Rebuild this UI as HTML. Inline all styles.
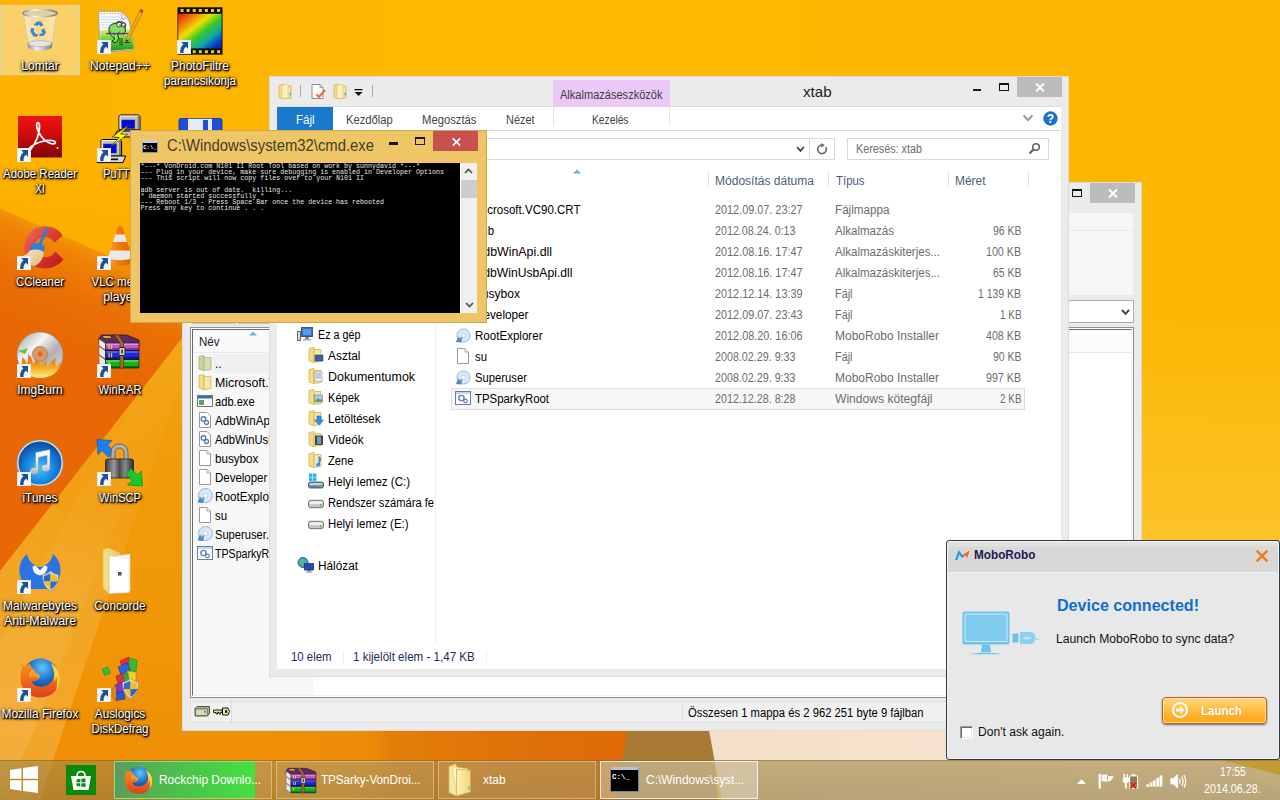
<!DOCTYPE html>
<html lang="hu"><head><meta charset="utf-8"><title>Asztal</title>
<style>
*{box-sizing:border-box;margin:0;padding:0}
html,body{width:1280px;height:800px;overflow:hidden;background:#fbb800}
body{font-family:"Liberation Sans","DejaVu Sans",sans-serif;font-size:12px;color:#000;position:relative}
.a{position:absolute}
.t{position:absolute;white-space:pre;overflow:visible}
.dl{position:absolute;white-space:pre;color:#fff;text-shadow:1px 1px 1px #000,1px 1px 2px rgba(0,0,0,.9),0 1px 3px rgba(0,0,0,.9),0 0 3px rgba(0,0,0,.7)}
svg{position:absolute;overflow:visible}
#bg,#icons,#tc,#explorer,#cmd,#popup,#taskbar{position:absolute;left:0;top:0;width:1280px;height:800px;overflow:hidden}

</style></head>
<body>
<div id="bg">
<svg style="left:0;top:0" width="1280" height="800" viewBox="0 0 1280 800">
<defs>
<linearGradient id="g0" x1="0" y1="0" x2="1" y2="0"><stop offset="0" stop-color="#fdb300"/><stop offset="0.45" stop-color="#fdba00"/><stop offset="1" stop-color="#fbb600"/></linearGradient>
<linearGradient id="g0b" x1="0" y1="0" x2="0" y2="1"><stop offset="0" stop-color="#fcc42c" stop-opacity="0"/><stop offset="1" stop-color="#fcc42c" stop-opacity="1"/></linearGradient>
<linearGradient id="g1" gradientUnits="userSpaceOnUse" x1="60" y1="235" x2="20" y2="327"><stop offset="0" stop-color="#f49208"/><stop offset=".12" stop-color="#f08406"/><stop offset=".5" stop-color="#ea7005"/><stop offset="1" stop-color="#e76804"/></linearGradient>
<linearGradient id="g3" x1="0" y1="0" x2="0" y2="1"><stop offset="0" stop-color="#f5a812"/><stop offset=".3" stop-color="#f19c0a"/><stop offset=".7" stop-color="#f09606"/><stop offset="1" stop-color="#ee8c06"/></linearGradient>
<linearGradient id="g2" gradientUnits="userSpaceOnUse" x1="182" y1="0" x2="625" y2="0"><stop offset="0" stop-color="#ef9006"/><stop offset="0.35" stop-color="#ee8e08"/><stop offset="0.43" stop-color="#ec8a08"/><stop offset="0.47" stop-color="#e47e08"/><stop offset="0.8" stop-color="#de7008"/><stop offset="1" stop-color="#e06a08"/></linearGradient>
<linearGradient id="g4" x1="0" y1="0" x2="1" y2="0"><stop offset="0" stop-color="#f5dfc8"/><stop offset="1" stop-color="#f8e8d8"/></linearGradient>
<linearGradient id="gb1" gradientUnits="userSpaceOnUse" x1="170" y1="350" x2="20" y2="720"><stop offset="0" stop-color="#f8c868" stop-opacity="0.05"/><stop offset=".4" stop-color="#f8c868" stop-opacity=".1"/><stop offset=".65" stop-color="#f8c868" stop-opacity=".28"/><stop offset="1" stop-color="#f8c868" stop-opacity=".38"/></linearGradient>
<linearGradient id="gb2" gradientUnits="userSpaceOnUse" x1="170" y1="350" x2="20" y2="720"><stop offset="0" stop-color="#fad890" stop-opacity="0"/><stop offset=".5" stop-color="#fad890" stop-opacity=".05"/><stop offset="1" stop-color="#fad890" stop-opacity=".16"/></linearGradient>
<linearGradient id="g5" x1="0" y1="0" x2="0" y2="1"><stop offset="0" stop-color="#fca800" stop-opacity="0"/><stop offset="1" stop-color="#fba600" stop-opacity=".9"/></linearGradient>
</defs>
<rect width="1280" height="800" fill="url(#g0)"/>
<polygon points="0,150 260,150 260,320 0,208" fill="url(#g5)"/>
<rect x="1060" y="300" width="220" height="260" fill="url(#g0b)"/>
<rect x="1060" y="560" width="220" height="200" fill="#fcc42c"/>
<polygon points="0,338 182,338 260,300 260,800 0,800" fill="url(#g3)"/>
<polygon points="0,208.500 130,265 182,288 182,338 0,571" fill="url(#g1)"/>
<polygon points="0,571 182,338 182,379 53,760 40,800 0,800" fill="url(#gb1)"/>
<polygon points="0,640 110,440 182,358 30,740 0,800" fill="url(#gb2)"/>
<rect x="182" y="725" width="448" height="75" fill="url(#g2)"/>
<polygon points="628,725 712,725 718,800 616,800" fill="#a87a34"/>
<polygon points="708,725 1280,725 1280,800 722,800" fill="url(#g4)"/>
<polygon points="1200,755 1280,755 1280,775" fill="#f8bc20"/>
<polygon points="1200,755 1280,775 1280,792" fill="#fcecd0"/>
</svg>
</div>
<div id="icons">
<div class="a" style="left:0px;top:5px;width:80px;height:70px;background:rgba(246,244,240,.44);border:1px solid rgba(205,215,205,.8);"></div>
<svg style="left:16px;top:7px" width="48" height="48" viewBox="0 0 48 48"><defs><linearGradient id="rb1" x1="0" y1="0" x2="1" y2="0"><stop offset="0" stop-color="#fff" stop-opacity=".55"/><stop offset=".5" stop-color="#fff" stop-opacity=".2"/><stop offset="1" stop-color="#fff" stop-opacity=".5"/></linearGradient>
<linearGradient id="rb2" x1="0" y1="0" x2="1" y2="0"><stop offset="0" stop-color="#8d8d8d"/><stop offset=".35" stop-color="#f4f4f4"/><stop offset=".7" stop-color="#b5b5b5"/><stop offset="1" stop-color="#7a7a7a"/></linearGradient></defs>
<path d="M7.5 6.5 L12.5 40 Q24 47 35.5 40 L40.5 6.5 Z" fill="url(#rb1)" stroke="#c9c3a8" stroke-width=".7"/>
<path d="M11.6 36 Q24 30.5 36.4 36 L35.8 41 Q24 47.5 12.2 41 Z" fill="url(#rb2)"/>
<ellipse cx="24" cy="36.6" rx="11.6" ry="3" fill="#e6e6e6" stroke="#a8a8a8" stroke-width=".6"/>
<ellipse cx="24" cy="6.3" rx="17" ry="3.4" fill="#d9d2ae" fill-opacity=".8" stroke="url(#rb2)" stroke-width="1.6"/>
<path d="M17.5 18 L21 14.5 H25 L27.5 18.5 L24.5 19.5 L23 17.5 L21.5 19 Z M28 21 L30 25.5 L27.5 29 H23 L24 26.5 H26.5 L25.2 23.5 Z M15.2 21 L18.5 21.5 L17.8 24 L19.5 27 L22 27 L21 29.8 L17.5 29.5 L14.3 24.5 Z" fill="#3a86e0"/></svg>
<div class="dl" style="left:-160px;width:400px;text-align:center;top:59.2px;height:15px;line-height:15px;font-size:12px;color:#fff;transform:scaleX(1.0041);transform-origin:50% 50%;">Lomtár</div>
<svg style="left:95.5px;top:7px" width="48" height="48" viewBox="0 0 48 48"><defs><linearGradient id="np1" x1="0" y1="0" x2="0" y2="1"><stop offset="0" stop-color="#f0f488"/><stop offset=".35" stop-color="#8cd848"/><stop offset=".75" stop-color="#40b030"/><stop offset="1" stop-color="#168a1c"/></linearGradient></defs>
<path d="M2.600 4.300 H24.800 L32.600 11.400 L38.300 42.500 L3.800 45.500 Z" fill="#fbfcfe" stroke="#8e9cb0" stroke-width=".9"/>
<path d="M24.800 4.300 L25.600 11.800 L32.600 11.400 Z" fill="#dfe6ee" stroke="#8e9cb0" stroke-width=".6"/>
<path d="M4.500 10h20M4.500 12.700h24M4.600 15.400h25M4.700 18.100h26M4.800 20.800h26" stroke="#bcd2ec" stroke-width=".9"/>
<path d="M4.300 23 L34.700 21.500 L37.600 41.800 L4.400 44.700 Z" fill="url(#np1)"/>
<circle cx="5.2" cy="6.5" r=".75" fill="#f0a020"/><circle cx="8.1" cy="6.5" r=".75" fill="#f0a020"/><circle cx="11.0" cy="6.5" r=".75" fill="#f0a020"/><circle cx="13.9" cy="6.5" r=".75" fill="#f0a020"/><circle cx="16.8" cy="6.5" r=".75" fill="#f0a020"/><circle cx="19.7" cy="6.5" r=".75" fill="#f0a020"/><circle cx="22.6" cy="6.5" r=".75" fill="#f0a020"/>
<path d="M13 24 Q12.500 17 19 16.500 Q22 13.500 26.500 15 Q30.500 17 29 21.500 Q31 24 27.500 26.500 L21.500 27 Q24 31 21 35 Q17.500 37 16 34 Q19 33.500 18.500 30.500 Q14 29.500 13 24 Z" fill="#86e060" stroke="#14360c" stroke-width="1"/>
<circle cx="23.300" cy="17.600" r="2.400" fill="#fff" stroke="#111" stroke-width=".8"/><circle cx="27.800" cy="18" r="2.100" fill="#fff" stroke="#111" stroke-width=".8"/>
<circle cx="24" cy="18" r=".7" fill="#111"/><circle cx="28.300" cy="18.300" r=".6" fill="#111"/>
<path d="M10 26.500 H32" stroke="#7a2a8a" stroke-width="1.300"/><path d="M13 26.500 L15 24.500 M17 26.500 L19 28.500 M22 26.500 L24 24.500 M26 26.500 L28 28.500" stroke="#14360c" stroke-width=".8"/>
<path d="M24 31 V38.500 M26 31 V38.500 M28.500 35.500 H34" stroke="#14360c" stroke-width=".9"/>
<path d="M44.800 2 L47.300 3.600 L32.300 33.600 L30 35 L30 32.200 Z" fill="#f4b020" stroke="#9a6408" stroke-width=".6"/>
<path d="M44.800 2 L47.300 3.600 L46 6.200 L43.600 4.600 Z" fill="#c83c3c"/><path d="M30 32.200 L30 35 L32.300 33.600 Z" fill="#222"/></svg>
<svg style="left:96.5px;top:40px" width="14" height="14" viewBox="0 0 14 14"><rect x="0" y="0" width="14" height="14" fill="#f7f7f4"/><rect x="0.5" y="0.5" width="13" height="13" fill="none" stroke="#e6e8ec" stroke-width="1"/><path d="M4.200 2 H11 V8.800 L9 6.800 C7 8.500 6.200 10.500 6.600 13 H3.300 C2.800 9.500 4 6.500 6.400 4.300 Z" fill="#1a509e"/></svg>
<div class="dl" style="left:-80.5px;width:400px;text-align:center;top:59.2px;height:15px;line-height:15px;font-size:12px;color:#fff;transform:scaleX(1.0104);transform-origin:50% 50%;">Notepad++</div>
<svg style="left:175.5px;top:7px" width="48" height="48" viewBox="0 0 48 48"><defs><linearGradient id="pf1" x1="0" y1="0" x2="1" y2="1"><stop offset="0" stop-color="#e81808"/><stop offset=".2" stop-color="#f07808"/><stop offset=".38" stop-color="#f0e000"/><stop offset=".55" stop-color="#38c828"/><stop offset=".72" stop-color="#10a8a8"/><stop offset=".88" stop-color="#0838c8"/><stop offset="1" stop-color="#0820a0"/></linearGradient></defs>
<rect x="1.5" y="0.3" width="45" height="47.4" fill="#0a0a0a"/>
<rect x="2.2" y="6.8" width="43.4" height="34.6" fill="url(#pf1)"/><rect x="4.5" y="2" width="3" height="3" fill="#f4c818"/><rect x="4.5" y="43.2" width="3" height="3" fill="#f4c818"/><rect x="10.6" y="2" width="3" height="3" fill="#f4c818"/><rect x="10.6" y="43.2" width="3" height="3" fill="#f4c818"/><rect x="16.7" y="2" width="3" height="3" fill="#f4c818"/><rect x="16.7" y="43.2" width="3" height="3" fill="#f4c818"/><rect x="22.8" y="2" width="3" height="3" fill="#f4c818"/><rect x="22.8" y="43.2" width="3" height="3" fill="#f4c818"/><rect x="28.9" y="2" width="3" height="3" fill="#f4c818"/><rect x="28.9" y="43.2" width="3" height="3" fill="#f4c818"/><rect x="35.0" y="2" width="3" height="3" fill="#f4c818"/><rect x="35.0" y="43.2" width="3" height="3" fill="#f4c818"/><rect x="41.1" y="2" width="3" height="3" fill="#f4c818"/><rect x="41.1" y="43.2" width="3" height="3" fill="#f4c818"/></svg>
<svg style="left:176.5px;top:40px" width="14" height="14" viewBox="0 0 14 14"><rect x="0" y="0" width="14" height="14" fill="#f7f7f4"/><rect x="0.5" y="0.5" width="13" height="13" fill="none" stroke="#e6e8ec" stroke-width="1"/><path d="M4.200 2 H11 V8.800 L9 6.800 C7 8.500 6.200 10.500 6.600 13 H3.300 C2.800 9.500 4 6.500 6.400 4.300 Z" fill="#1a509e"/></svg>
<div class="dl" style="left:-0.5px;width:400px;text-align:center;top:59.2px;height:15px;line-height:15px;font-size:12px;color:#fff;transform:scaleX(0.9961);transform-origin:50% 50%;">PhotoFiltre</div>
<div class="dl" style="left:-0.5px;width:400px;text-align:center;top:74.2px;height:15px;line-height:15px;font-size:12px;color:#fff;transform:scaleX(0.9724);transform-origin:50% 50%;">parancsikonja</div>
<svg style="left:16px;top:115px" width="48" height="48" viewBox="0 0 48 48"><defs><linearGradient id="ad1" x1="0" y1="0" x2="0" y2="1"><stop offset="0" stop-color="#f01414"/><stop offset=".5" stop-color="#c80a0a"/><stop offset="1" stop-color="#7c0606"/></linearGradient></defs>
<rect x="2" y="1" width="44" height="41.5" fill="url(#ad1)"/>
<path d="M14 35.5 C20 28 24 18 23.5 10.5 C23.2 6.5 20.5 6.5 20.6 10.5 C21 17 27 25.5 34 28.3 C39.5 30 41.2 27.2 37.5 25.8 C31 24 19 27.5 13 33.5 C10.5 36 12 37.5 14 35.5 Z" fill="none" stroke="#fff" stroke-width="1.7"/>
<circle cx="41.5" cy="33" r=".9" fill="#fff"/></svg>
<svg style="left:17px;top:148px" width="14" height="14" viewBox="0 0 14 14"><rect x="0" y="0" width="14" height="14" fill="#f7f7f4"/><rect x="0.5" y="0.5" width="13" height="13" fill="none" stroke="#e6e8ec" stroke-width="1"/><path d="M4.200 2 H11 V8.800 L9 6.800 C7 8.500 6.200 10.500 6.600 13 H3.300 C2.800 9.500 4 6.500 6.400 4.300 Z" fill="#1a509e"/></svg>
<div class="dl" style="left:-160px;width:400px;text-align:center;top:167.2px;height:15px;line-height:15px;font-size:12px;color:#fff;transform:scaleX(0.9562);transform-origin:50% 50%;">Adobe Reader</div>
<div class="dl" style="left:-160px;width:400px;text-align:center;top:182.2px;height:15px;line-height:15px;font-size:12px;color:#fff;transform:scaleX(0.8291);transform-origin:50% 50%;">XI</div>
<svg style="left:95.5px;top:115px" width="48" height="48" viewBox="0 0 48 48"><path d="M23 1 L24.500 0 H42.500 L44 1.500 V14.800 H23 Z" fill="#c4c4c4" stroke="#000" stroke-width="1"/>
<path d="M41.500 1.500 H43.500 V14.300 H41.500 Z" fill="#808080"/><path d="M24 1 H42 M24 1 V14" stroke="#fff" stroke-width=".8"/>
<rect x="25.800" y="5" width="13" height="8.500" fill="#0404f4" stroke="#404040" stroke-width=".6"/>
<path d="M21 16 H47 L44 22 H18 Z" fill="#c4c4c4" stroke="#000" stroke-width="1"/>
<path d="M5 25.500 L6.500 24.500 H24 L25.600 26 V41 H5 Z" fill="#c4c4c4" stroke="#000" stroke-width="1"/>
<path d="M23 26 H25 V40.500 H23 Z" fill="#808080"/><path d="M6 25.500 H23.500 M6 25.500 V40" stroke="#fff" stroke-width=".8"/>
<rect x="7.300" y="29" width="13" height="9" fill="#0404f4" stroke="#404040" stroke-width=".6"/>
<path d="M3.500 41 H29.700 L27 47.600 H1 Z" fill="#d8d8d8" stroke="#000" stroke-width="1"/><path d="M10 43.500 H22 V45.200 H10 Z" fill="#111"/>
<path d="M34.600 8.400 L16.200 21.900 L23.400 22.500 L13.200 32.800 L31.600 19.300 L24.500 19 Z" fill="#ffff00" stroke="#1a1a00" stroke-width=".6"/></svg>
<svg style="left:96.5px;top:148px" width="14" height="14" viewBox="0 0 14 14"><rect x="0" y="0" width="14" height="14" fill="#f7f7f4"/><rect x="0.5" y="0.5" width="13" height="13" fill="none" stroke="#e6e8ec" stroke-width="1"/><path d="M4.200 2 H11 V8.800 L9 6.800 C7 8.500 6.200 10.500 6.600 13 H3.300 C2.800 9.500 4 6.500 6.400 4.300 Z" fill="#1a509e"/></svg>
<div class="dl" style="left:-80.5px;width:400px;text-align:center;top:167.2px;height:15px;line-height:15px;font-size:12px;color:#fff;transform:scaleX(0.8971);transform-origin:50% 50%;">PuTTY</div>
<svg style="left:175.5px;top:115px" width="48" height="48" viewBox="0 0 48 48"><path d="M3 5 Q3 3.5 4.5 3.5 H44 Q46 3.5 46 5.5 V45 H3 Z" fill="#1c50d8" stroke="#0c2c90" stroke-width=".8"/>
<rect x="12" y="3.8" width="24" height="16" fill="#e6eaf2"/><rect x="27" y="5" width="5" height="13" fill="#1c50d8"/></svg>
<svg style="left:16px;top:223px" width="48" height="48" viewBox="0 0 48 48"><defs><linearGradient id="cc1" x1="0" y1="0" x2="1" y2="1"><stop offset="0" stop-color="#f07060"/><stop offset=".5" stop-color="#d83a30"/><stop offset="1" stop-color="#b81818"/></linearGradient>
<linearGradient id="cc2" x1="0" y1="0" x2="1" y2="1"><stop offset="0" stop-color="#f8e8c8"/><stop offset="1" stop-color="#e0b880"/></linearGradient></defs>
<path d="M46.5 12.5 C40 1.5 24 0.5 15 8.5 C5.5 17 6 33.5 16 41.5 C25 48 39.5 46.5 47.5 36.5 L39.5 28.5 C35.5 34.5 27 36.5 22 31.5 C17 26.5 18 18.5 24 15 C29 12.5 35.5 14.5 38.5 19.5 Z" fill="url(#cc1)"/>
<path d="M30 4 L32.5 5 L24.5 24 L21.5 23 Z" fill="#2a7fd8"/>
<path d="M15.5 21 Q21 18 28.5 23 L28 29 Q21 25 14 27.5 Z" fill="#2a80dc"/>
<path d="M14 27.5 Q21 25 28 29 Q27 38 20 42.5 Q11 44 1.5 35.5 Q10 33 14 27.5 Z" fill="url(#cc2)"/></svg>
<svg style="left:17px;top:256px" width="14" height="14" viewBox="0 0 14 14"><rect x="0" y="0" width="14" height="14" fill="#f7f7f4"/><rect x="0.5" y="0.5" width="13" height="13" fill="none" stroke="#e6e8ec" stroke-width="1"/><path d="M4.200 2 H11 V8.800 L9 6.800 C7 8.500 6.200 10.500 6.600 13 H3.300 C2.800 9.500 4 6.500 6.400 4.300 Z" fill="#1a509e"/></svg>
<div class="dl" style="left:-160px;width:400px;text-align:center;top:275.2px;height:15px;line-height:15px;font-size:12px;color:#fff;transform:scaleX(0.9469);transform-origin:50% 50%;">CCleaner</div>
<svg style="left:95.5px;top:223px" width="48" height="48" viewBox="0 0 48 48"><defs><linearGradient id="vl1" x1="0" y1="0" x2="1" y2="0"><stop offset="0" stop-color="#f8a848"/><stop offset=".45" stop-color="#f47c08"/><stop offset="1" stop-color="#d86000"/></linearGradient></defs>
<path d="M5 36 H43 L46 46 H2 Z" fill="#f08a10"/>
<path d="M21.5 4 Q24 1.5 26.5 4 L38 40 Q24 46 10 40 Z" fill="url(#vl1)"/>
<path d="M19.3 11.5 H28.7 L31 19 H17 Z" fill="#e8e8e8"/>
<path d="M14.2 27.5 H33.8 L36.2 35.5 Q24 39 11.8 35.5 Z" fill="#e8e8e8"/></svg>
<svg style="left:96.5px;top:256px" width="14" height="14" viewBox="0 0 14 14"><rect x="0" y="0" width="14" height="14" fill="#f7f7f4"/><rect x="0.5" y="0.5" width="13" height="13" fill="none" stroke="#e6e8ec" stroke-width="1"/><path d="M4.200 2 H11 V8.800 L9 6.800 C7 8.500 6.200 10.500 6.600 13 H3.300 C2.800 9.500 4 6.500 6.400 4.300 Z" fill="#1a509e"/></svg>
<div class="dl" style="left:-80.5px;width:400px;text-align:center;top:275.2px;height:15px;line-height:15px;font-size:12px;color:#fff;transform:scaleX(0.9602);transform-origin:50% 50%;">VLC media</div>
<div class="dl" style="left:-80.5px;width:400px;text-align:center;top:290.2px;height:15px;line-height:15px;font-size:12px;color:#fff;transform:scaleX(1.0250);transform-origin:50% 50%;">player</div>
<svg style="left:16px;top:331px" width="48" height="48" viewBox="0 0 48 48"><defs><linearGradient id="ib1" x1="0" y1="0" x2="1" y2="1"><stop offset="0" stop-color="#9a9a9a"/><stop offset=".35" stop-color="#f4f4f4"/><stop offset=".6" stop-color="#b0b0b0"/><stop offset="1" stop-color="#e0e0e0"/></linearGradient>
<linearGradient id="ib2" x1="0" y1="0" x2="0" y2="1"><stop offset="0" stop-color="#e84a08"/><stop offset=".5" stop-color="#f8a010"/><stop offset="1" stop-color="#fff090"/></linearGradient></defs>
<circle cx="24" cy="24" r="23" fill="url(#ib1)" stroke="#8a8a8a" stroke-width=".6"/>
<path d="M2 20 L12 17 L9 23 Z" fill="#58c848"/><path d="M46 16 L36 19 L38 22 Z" fill="#d898d8"/>
<circle cx="24" cy="23" r="7.5" fill="#d89868" stroke="#b07848" stroke-width=".8"/><circle cx="24" cy="23" r="2.5" fill="#e86a10"/>
<path d="M4 36 Q7 30 6 26 Q10 29 11 33 Q13 27 12 23 Q17 28 17 34 Q20 30 19 27 Q24 31 24 36 Q27 31 31 30 Q30 34 32 36 Q35 30 40 27 Q38 33 41 36 Q43 32 45 31 Q44 38 38 43 Q24 51 10 43 Q6 40 4 36 Z" fill="url(#ib2)"/></svg>
<svg style="left:17px;top:364px" width="14" height="14" viewBox="0 0 14 14"><rect x="0" y="0" width="14" height="14" fill="#f7f7f4"/><rect x="0.5" y="0.5" width="13" height="13" fill="none" stroke="#e6e8ec" stroke-width="1"/><path d="M4.200 2 H11 V8.800 L9 6.800 C7 8.500 6.200 10.500 6.600 13 H3.300 C2.800 9.500 4 6.500 6.400 4.300 Z" fill="#1a509e"/></svg>
<div class="dl" style="left:-160px;width:400px;text-align:center;top:383.2px;height:15px;line-height:15px;font-size:12px;color:#fff;transform:scaleX(1.0033);transform-origin:50% 50%;">ImgBurn</div>
<svg style="left:95.5px;top:331px" width="48" height="48" viewBox="0 0 48 48"><g transform="translate(2.5,3.5)"><path d="M0.500 4 L3 0.500 H28 L40.500 5.500 L40.500 12.500 H7 L0.500 8 Z" fill="#5c2c60" stroke="#2a1030" stroke-width=".8"/>
<path d="M4 1.500 H11 L13 3.500 H6 Z" fill="#c8b830"/>
<path d="M0.500 4.500 L7 9 V15.500 L0.500 11 Z" fill="#eeeef4" stroke="#555" stroke-width=".5"/>
<path d="M7 8.500 H40.500 V15.500 H7 Z" fill="#c458c8"/><path d="M7 8.500 H40.500 V10.500 H7 Z" fill="#e090e0"/><path d="M7 13.500 H40.500 V15.500 H7 Z" fill="#8a3090"/>
<path d="M0.500 12 L7 16.500 V24.500 L0.500 20 Z" fill="#e8e8f0" stroke="#555" stroke-width=".5"/>
<path d="M7 16.500 H40.500 V24.500 H7 Z" fill="#1c28e0"/><path d="M7 16.500 H40.500 V18.500 H7 Z" fill="#4a60f4"/><path d="M7 22.500 H40.500 V24.500 H7 Z" fill="#101890"/>
<path d="M0.500 21 L7 25.500 V33.500 L0.500 29 Z" fill="#e8e8f0" stroke="#555" stroke-width=".5"/>
<path d="M7 25.500 H40.500 V33.500 H7 Z" fill="#14b020"/><path d="M7 25.500 H40.500 V27.500 H7 Z" fill="#40d848"/><path d="M7 31.500 H40.500 V33.500 H7 Z" fill="#087010"/>
<path d="M7 8.500 H40.500 V33.500 H7 Z" fill="none" stroke="#1a1a1a" stroke-width=".7"/>
<path d="M7 16 H40.500 M7 25 H40.500" stroke="#111" stroke-width="1"/>
<path d="M16 0.500 H20 L25 8.500 V33.500 H21.500 V8.500 Z" fill="#a06a2c" stroke="#4a2c0c" stroke-width=".6"/>
<rect x="20.500" y="13" width="6" height="8" rx="1" fill="#d0d0d0" stroke="#222" stroke-width="1"/><rect x="22.800" y="15" width="1.600" height="4" fill="#333"/>
<path d="M10 10.500h1.200v4H10z M12.500 10.500h1.200v4h-1.200z M10 18.500h1.200v4.500H10z M12.500 18.500h1.200v4.500h-1.200z M10 27h1.200v3.500H10z" fill="#e0cc40"/></g></svg>
<svg style="left:96.5px;top:364px" width="14" height="14" viewBox="0 0 14 14"><rect x="0" y="0" width="14" height="14" fill="#f7f7f4"/><rect x="0.5" y="0.5" width="13" height="13" fill="none" stroke="#e6e8ec" stroke-width="1"/><path d="M4.200 2 H11 V8.800 L9 6.800 C7 8.500 6.200 10.500 6.600 13 H3.300 C2.800 9.500 4 6.500 6.400 4.300 Z" fill="#1a509e"/></svg>
<div class="dl" style="left:-80.5px;width:400px;text-align:center;top:383.2px;height:15px;line-height:15px;font-size:12px;color:#fff;transform:scaleX(0.9347);transform-origin:50% 50%;">WinRAR</div>
<svg style="left:16px;top:439px" width="48" height="48" viewBox="0 0 48 48"><defs><radialGradient id="it1" cx=".5" cy=".62" r=".62"><stop offset="0" stop-color="#40c8fc"/><stop offset=".45" stop-color="#1c8ce8"/><stop offset=".85" stop-color="#0c56b0"/><stop offset="1" stop-color="#0a4898"/></radialGradient>
<linearGradient id="it2" x1="0" y1="0" x2="0" y2="1"><stop offset="0" stop-color="#ffffff"/><stop offset=".6" stop-color="#e0e4ea"/><stop offset="1" stop-color="#a8b0bc"/></linearGradient></defs>
<circle cx="24" cy="24" r="22.300" fill="url(#it1)" stroke="#dde4ec" stroke-width="1.600"/>
<circle cx="24" cy="24" r="23.200" fill="none" stroke="#8a96a4" stroke-width=".5"/>
<path d="M19.500 13.500 L34 10.500 V29 A4.300 3.600 0 1 1 31 25.600 V16.500 L22.500 18.400 V32 A4.300 3.600 0 1 1 19.500 28.600 Z" fill="url(#it2)" stroke="#7a8ca4" stroke-width=".5"/></svg>
<svg style="left:17px;top:472px" width="14" height="14" viewBox="0 0 14 14"><rect x="0" y="0" width="14" height="14" fill="#f7f7f4"/><rect x="0.5" y="0.5" width="13" height="13" fill="none" stroke="#e6e8ec" stroke-width="1"/><path d="M4.200 2 H11 V8.800 L9 6.800 C7 8.500 6.200 10.500 6.600 13 H3.300 C2.800 9.500 4 6.500 6.400 4.300 Z" fill="#1a509e"/></svg>
<div class="dl" style="left:-160px;width:400px;text-align:center;top:491.2px;height:15px;line-height:15px;font-size:12px;color:#fff;transform:scaleX(0.9839);transform-origin:50% 50%;">iTunes</div>
<svg style="left:95.5px;top:439px" width="48" height="48" viewBox="0 0 48 48"><defs><linearGradient id="ws1" x1="0" y1="0" x2="1" y2="0"><stop offset="0" stop-color="#3a3a3a"/><stop offset=".3" stop-color="#9a9a9a"/><stop offset=".5" stop-color="#4a4a4a"/><stop offset=".7" stop-color="#8a8a8a"/><stop offset="1" stop-color="#2a2a2a"/></linearGradient></defs>
<path d="M1 0.5 L16 1.5 L11.5 6 L18 12.5 L12.5 18 L6 11.5 L2 15.5 Z" fill="#1c7ef0" stroke="#0c4ab0" stroke-width=".6"/>
<path d="M15 21 V14 Q15 5 23.5 5 Q32 5 32 14 V21 H28 V14 Q28 9 23.5 9 Q19 9 19 14 V21 Z" fill="#b0b0b0" stroke="#555" stroke-width=".8"/>
<rect x="9.500" y="20" width="28" height="19" rx="2" fill="url(#ws1)" stroke="#222" stroke-width=".8"/>
<path d="M46.500 47 L31.500 46 L36 41.500 L29.500 35 L35 29.500 L41.500 36 L45.500 32 Z" fill="#18c828" stroke="#0c8018" stroke-width=".6"/></svg>
<svg style="left:96.5px;top:472px" width="14" height="14" viewBox="0 0 14 14"><rect x="0" y="0" width="14" height="14" fill="#f7f7f4"/><rect x="0.5" y="0.5" width="13" height="13" fill="none" stroke="#e6e8ec" stroke-width="1"/><path d="M4.200 2 H11 V8.800 L9 6.800 C7 8.500 6.200 10.500 6.600 13 H3.300 C2.800 9.500 4 6.500 6.400 4.300 Z" fill="#1a509e"/></svg>
<div class="dl" style="left:-80.5px;width:400px;text-align:center;top:491.2px;height:15px;line-height:15px;font-size:12px;color:#fff;transform:scaleX(0.9263);transform-origin:50% 50%;">WinSCP</div>
<svg style="left:16px;top:547px" width="48" height="48" viewBox="0 0 48 48"><path d="M11 7 C5 12 2 20 4 28 C5.500 34 9 39 13.500 42 L35 42 C39 39 42.500 34 44 28 C46 20 43 12 37 7 C36 13 31 19 24 20 C17 19 12 13 11 7 Z" fill="#2a72e6"/>
<path d="M16.500 20 Q17 27.500 24 28.500 Q31 27.500 31.500 20 Q30 18 28 19 L24 23.500 L20 19 Q18 18 16.500 20 Z" fill="#fdfdf8"/><path d="M26.5 28 q6 -1.500 8 -4 q2 2.500 8 4 q0.500 11 -8 16 q-8.500 -5 -8 -16 Z" fill="#e8e8e8" stroke="#8a8a8a" stroke-width=".8"/>
<path d="M28.0 29 q4.500 -1.300 6.500 -3 v8.500 h-7 Z" fill="#2a6ad0"/><path d="M34.5 26 q2 1.700 6.500 3 l0.500 5.500 h-7 Z" fill="#f0c020"/>
<path d="M28.0 34.5 h7 v8 q-5 -3 -7 -8 Z" fill="#f0c020"/><path d="M34.5 34.5 h7 q-2 5 -7 8 Z" fill="#2a6ad0"/></svg>
<svg style="left:17px;top:580px" width="14" height="14" viewBox="0 0 14 14"><rect x="0" y="0" width="14" height="14" fill="#f7f7f4"/><rect x="0.5" y="0.5" width="13" height="13" fill="none" stroke="#e6e8ec" stroke-width="1"/><path d="M4.200 2 H11 V8.800 L9 6.800 C7 8.500 6.200 10.500 6.600 13 H3.300 C2.800 9.500 4 6.500 6.400 4.300 Z" fill="#1a509e"/></svg>
<div class="dl" style="left:-160px;width:400px;text-align:center;top:599.2px;height:15px;line-height:15px;font-size:12px;color:#fff;transform:scaleX(0.9969);transform-origin:50% 50%;">Malwarebytes</div>
<div class="dl" style="left:-160px;width:400px;text-align:center;top:614.2px;height:15px;line-height:15px;font-size:12px;color:#fff;transform:scaleX(1.0283);transform-origin:50% 50%;">Anti-Malware</div>
<svg style="left:95.5px;top:547px" width="48" height="48" viewBox="0 0 48 48"><defs><linearGradient id="fo1" x1="0" y1="0" x2="1" y2="0"><stop offset="0" stop-color="#f6e6a0"/><stop offset="1" stop-color="#e8c860"/></linearGradient></defs>
<path d="M7 2.500 L13 1 L24 6 V40 L13 46.500 L7 41 Z" fill="url(#fo1)" stroke="#d8b850" stroke-width=".6"/>
<path d="M15 10 L34 7 V44 L15 45 Z" fill="#fcfcfc" stroke="#d8d8d8" stroke-width=".6"/>
<path d="M13 9 L33 11.500 V45.500 L13 46.500 Z" fill="#fff" stroke="#dcdcdc" stroke-width=".6"/>
<rect x="22" y="25" width="3.500" height="3.500" fill="#284868"/><rect x="23" y="26" width="1.500" height="1.500" fill="#d83a8a"/>
<path d="M7 2.500 L13 1 V46.500 L7 41 Z" fill="#f2dc88" stroke="#d8b850" stroke-width=".5"/></svg>
<div class="dl" style="left:-80.5px;width:400px;text-align:center;top:599.2px;height:15px;line-height:15px;font-size:12px;color:#fff;transform:scaleX(0.9879);transform-origin:50% 50%;">Concorde</div>
<svg style="left:16px;top:655px" width="48" height="48" viewBox="0 0 48 48"><defs><radialGradient id="ffgd" cx=".55" cy=".25" r=".8"><stop offset="0" stop-color="#5cc8f8"/><stop offset=".45" stop-color="#1c6cc8"/><stop offset="1" stop-color="#0a1c60"/></radialGradient>
<linearGradient id="ffod" x1="0" y1="0" x2="0" y2="1"><stop offset="0" stop-color="#f8901c"/><stop offset=".5" stop-color="#f06a1c"/><stop offset="1" stop-color="#d8401c"/></linearGradient></defs>
<circle cx="24.500" cy="22" r="18.500" fill="url(#ffgd)"/>
<path d="M4 8 L9 11.500 L13.500 8.500 L16.500 13.500 C13 15.500 11.500 19 13 22.500 C16 21 20 21.500 23 24 C20 26.500 17.500 26.500 15.500 26 C17 30 22 32.500 27 31.500 C33 30.500 37.500 26 38 20 C39 15 37 11 35 8.500 C40 11 44 17 44 23.500 C44 34 35.500 42.500 24.500 42.500 C13 42.500 4.500 34 4.500 23 C4.500 19 5 15 6.500 12.500 Z" fill="url(#ffod)"/>
<path d="M35 8.500 C40 11 44 17 44 23.500 C44 28 42.500 32 40 35 C41.500 30 41.500 25 40 21 C40 24 39 26 38 27 C39 21 38 13 35 8.500 Z" fill="#ffd43a"/>
<path d="M16.500 13.500 C13 15.500 11.500 19 13 22.500 C16 21 20 21.500 23 24 L24 20.500 L20 17.500 Z" fill="#f89a28"/></svg>
<svg style="left:17px;top:688px" width="14" height="14" viewBox="0 0 14 14"><rect x="0" y="0" width="14" height="14" fill="#f7f7f4"/><rect x="0.5" y="0.5" width="13" height="13" fill="none" stroke="#e6e8ec" stroke-width="1"/><path d="M4.200 2 H11 V8.800 L9 6.800 C7 8.500 6.200 10.500 6.600 13 H3.300 C2.800 9.500 4 6.500 6.400 4.300 Z" fill="#1a509e"/></svg>
<div class="dl" style="left:-160px;width:400px;text-align:center;top:707.2px;height:15px;line-height:15px;font-size:12px;color:#fff;transform:scaleX(0.9955);transform-origin:50% 50%;">Mozilla Firefox</div>
<svg style="left:95.5px;top:655px" width="48" height="48" viewBox="0 0 48 48"><path d="M6 14 L12 12 L14.500 18 L8.500 20.500 Z" fill="#30c040" stroke="#188028" stroke-width=".5"/>
<path d="M24 6 L33 2 L36 10 L27 14.500 Z" fill="#e83030" stroke="#901818" stroke-width=".5"/>
<path d="M33 3 L41 5 L40 17 L33 16 Z" fill="#38b838" stroke="#188028" stroke-width=".5"/>
<path d="M22 12 L31 7.500 L34 15 L25 20 Z" fill="#3060e0" stroke="#182a90" stroke-width=".5"/>
<path d="M31 16 L40 17 L40 27 L32 27 Z" fill="#f0d020" stroke="#a08010" stroke-width=".5"/>
<path d="M20 21 L27 18.500 L29.500 26 L22 29 Z" fill="#e03040" stroke="#901820" stroke-width=".5"/>
<path d="M27 19 L32 18 L33 27 L29 28 Z" fill="#30a838" stroke="#188028" stroke-width=".5"/>
<path d="M19 30 L27 27.500 L28 36 L20 38 Z" fill="#8038c8" stroke="#401878" stroke-width=".5"/>
<path d="M19 38.500 L28 36.500 L29 44 L20 45.500 Z" fill="#2858d8" stroke="#182a90" stroke-width=".5"/>
<path d="M17 33 L20 31 L20 45 L17 43 Z" fill="#f08a20" stroke="#a05010" stroke-width=".5"/><path d="M26.5 27.5 q6 -1.500 8 -4 q2 2.500 8 4 q0.500 11 -8 16 q-8.500 -5 -8 -16 Z" fill="#e8e8e8" stroke="#8a8a8a" stroke-width=".8"/>
<path d="M28.0 28.5 q4.500 -1.300 6.500 -3 v8.500 h-7 Z" fill="#2a6ad0"/><path d="M34.5 25.5 q2 1.700 6.500 3 l0.500 5.500 h-7 Z" fill="#f0c020"/>
<path d="M28.0 34.0 h7 v8 q-5 -3 -7 -8 Z" fill="#f0c020"/><path d="M34.5 34.0 h7 q-2 5 -7 8 Z" fill="#2a6ad0"/></svg>
<svg style="left:96.5px;top:688px" width="14" height="14" viewBox="0 0 14 14"><rect x="0" y="0" width="14" height="14" fill="#f7f7f4"/><rect x="0.5" y="0.5" width="13" height="13" fill="none" stroke="#e6e8ec" stroke-width="1"/><path d="M4.200 2 H11 V8.800 L9 6.800 C7 8.500 6.200 10.500 6.600 13 H3.300 C2.800 9.500 4 6.500 6.400 4.300 Z" fill="#1a509e"/></svg>
<div class="dl" style="left:-80.5px;width:400px;text-align:center;top:707.2px;height:15px;line-height:15px;font-size:12px;color:#fff;transform:scaleX(0.9814);transform-origin:50% 50%;">Auslogics</div>
<div class="dl" style="left:-80.5px;width:400px;text-align:center;top:722.2px;height:15px;line-height:15px;font-size:12px;color:#fff;transform:scaleX(0.9604);transform-origin:50% 50%;">DiskDefrag</div>
</div>
<div id="tc">
<div class="a" style="left:182px;top:182px;width:960px;height:549px;background:#ebebeb;box-shadow:inset 0 0 0 1px #dcdcdc;"></div>
<div class="a" style="left:1072px;top:189px;width:10px;height:8px;border:1px solid #111;border-top-width:2.5px;"></div>
<div class="a" style="left:1090px;top:183px;width:45px;height:20px;background:#bcbcbc;"></div>
<svg style="left:1108px;top:189px" width="10" height="9" viewBox="0 0 10 9"><path d="M1 0.5 L9 8.5 M9 0.5 L1 8.5" stroke="#fff" stroke-width="1.8" fill="none"/></svg>
<div class="a" style="left:190px;top:212px;width:944px;height:19px;background:#f5f6f7;border:1px solid #e8e9ea;"></div>
<div class="a" style="left:190px;top:231px;width:944px;height:65px;background:#f5f6f7;border:1px solid #e8e9ea;border-top:0;"></div>
<div class="a" style="left:190px;top:300px;width:944px;height:23px;background:#fff;border:1px solid #acacac;"></div>
<svg style="left:1121px;top:309px" width="9" height="7" viewBox="0 0 9 7"><path d="M1 1 L4.5 4.8 L8 1" stroke="#444" stroke-width="1.9" fill="none"/></svg>
<div class="a" style="left:192px;top:323px;width:41px;height:1px;background:#c4c4c4;"></div>
<div class="a" style="left:238px;top:323px;width:31px;height:1px;background:#c4c4c4;"></div>
<div class="a" style="left:234px;top:323px;width:1px;height:3px;background:#c4c4c4;"></div>
<div class="a" style="left:190px;top:327px;width:944px;height:371px;background:#fff;border:1px solid #8a8e98;"></div>
<div class="a" style="left:192px;top:329px;width:940px;height:367px;background:#fff;border:1px solid #f0f0f0;border-left-color:#696969;border-top-color:#696969;"></div>
<div class="a" style="left:193px;top:330px;width:120px;height:365px;background:#f7f7f7;"></div>
<div class="a" style="left:193px;top:330px;width:938px;height:23px;background:#fcfcfc;border-bottom:1px solid #dfeaf7;"></div>
<div class="a" style="left:193px;top:330px;width:120px;height:23px;background:#fafafa;border-bottom:1px solid #dfeaf7;"></div>
<svg style="left:249px;top:331px" width="8" height="5" viewBox="0 0 8 5"><path d="M0 4.5 L4 0.5 L8 4.5 Z" fill="#6cb0dc"/></svg>
<div class="t" style="left:199.3px;top:332.6px;height:18px;line-height:18px;font-size:13px;color:#1a1a30;transform:scaleX(0.8910);transform-origin:0 50%;">Név</div>
<div class="a" style="left:213px;top:354px;width:100px;height:19px;background:#f0f0f0;"></div>
<svg style="left:197px;top:355.0px" width="16" height="16" viewBox="0 0 16 16"><path d="M2 1.5 L7 0.5 L7 15.5 L2 14 Z" fill="#c9d2a0" stroke="#aab080" stroke-width=".8"/><path d="M7 2.5 L14 2.5 L14 14.5 L7 15.5 Z" fill="#d6dcb4" stroke="#aab080" stroke-width=".8"/></svg>
<div class="t" style="left:215.2px;top:354.8px;height:18px;line-height:18px;font-size:13px;color:#000;transform:scaleX(0.8997);transform-origin:0 50%;">..</div>
<svg style="left:197px;top:374.0px" width="16" height="16" viewBox="0 0 16 16"><path d="M2 1.5 L7 0.5 L7 15.5 L2 14 Z" fill="#f3dc8a" stroke="#d9b64a" stroke-width=".8"/><path d="M7 2.5 L14 2.5 L14 14.5 L7 15.5 Z" fill="#f7e7a6" stroke="#d6b24a" stroke-width=".8"/></svg>
<div class="t" style="left:215.2px;top:373.8px;height:18px;line-height:18px;font-size:13px;color:#000;transform:scaleX(0.9516);transform-origin:0 50%;">Microsoft.VC90.CRT</div>
<svg style="left:197px;top:393.0px" width="16" height="16" viewBox="0 0 16 16"><rect x="0.5" y="2.5" width="15" height="11" fill="#fff" stroke="#777"/><rect x="1" y="3" width="14" height="2.5" fill="#3a6ea5"/><rect x="2" y="7" width="5" height="5" fill="#5b9f6a"/></svg>
<div class="t" style="left:215.2px;top:392.8px;height:18px;line-height:18px;font-size:13px;color:#000;transform:scaleX(0.8559);transform-origin:0 50%;">adb.exe</div>
<svg style="left:197px;top:412.0px" width="16" height="16" viewBox="0 0 16 16"><path d="M2.5 0.5 H10 L13.5 4 V15.5 H2.5 Z" fill="#fff" stroke="#9a9a9a" stroke-width="1"/><circle cx="6.5" cy="7" r="2.3" fill="none" stroke="#5a7fb0" stroke-width="1.4"/><circle cx="9.5" cy="10.5" r="2" fill="none" stroke="#5a7fb0" stroke-width="1.3"/></svg>
<div class="t" style="left:215.2px;top:411.8px;height:18px;line-height:18px;font-size:13px;color:#000;transform:scaleX(0.8933);transform-origin:0 50%;">AdbWinApi.dll</div>
<svg style="left:197px;top:431.0px" width="16" height="16" viewBox="0 0 16 16"><path d="M2.5 0.5 H10 L13.5 4 V15.5 H2.5 Z" fill="#fff" stroke="#9a9a9a" stroke-width="1"/><circle cx="6.5" cy="7" r="2.3" fill="none" stroke="#5a7fb0" stroke-width="1.4"/><circle cx="9.5" cy="10.5" r="2" fill="none" stroke="#5a7fb0" stroke-width="1.3"/></svg>
<div class="t" style="left:215.2px;top:430.8px;height:18px;line-height:18px;font-size:13px;color:#000;transform:scaleX(0.8669);transform-origin:0 50%;">AdbWinUsbApi.dll</div>
<svg style="left:197px;top:450.0px" width="16" height="16" viewBox="0 0 16 16"><path d="M2.5 0.5 H10 L13.5 4 V15.5 H2.5 Z" fill="#fff" stroke="#9a9a9a" stroke-width="1"/><path d="M10 0.5 V4 H13.5" fill="#f0f0f0" stroke="#9a9a9a" stroke-width=".8"/></svg>
<div class="t" style="left:215.2px;top:449.8px;height:18px;line-height:18px;font-size:13px;color:#000;transform:scaleX(0.8963);transform-origin:0 50%;">busybox</div>
<svg style="left:197px;top:469.0px" width="16" height="16" viewBox="0 0 16 16"><path d="M2.5 0.5 H10 L13.5 4 V15.5 H2.5 Z" fill="#fff" stroke="#9a9a9a" stroke-width="1"/><path d="M10 0.5 V4 H13.5" fill="#f0f0f0" stroke="#9a9a9a" stroke-width=".8"/></svg>
<div class="t" style="left:215.2px;top:468.8px;height:18px;line-height:18px;font-size:13px;color:#000;transform:scaleX(0.8826);transform-origin:0 50%;">Developer</div>
<svg style="left:197px;top:488.0px" width="16" height="16" viewBox="0 0 16 16"><circle cx="8.5" cy="7.5" r="7" fill="#d7e9f8" stroke="#8db8e0" stroke-width="1"/><circle cx="8.5" cy="7.5" r="2.2" fill="#fff" stroke="#a9c9e8" stroke-width=".8"/><path d="M0.5 14.5 L3 8.5 L5 11 L7.5 9 L6 15 Z" fill="#2f8fe0"/><path d="M4 12 L6.5 9.5" stroke="#f08030" stroke-width="1.5"/></svg>
<div class="t" style="left:215.2px;top:487.8px;height:18px;line-height:18px;font-size:13px;color:#000;transform:scaleX(0.8984);transform-origin:0 50%;">RootExplorer.apk</div>
<svg style="left:197px;top:506.99999999999994px" width="16" height="16" viewBox="0 0 16 16"><path d="M2.5 0.5 H10 L13.5 4 V15.5 H2.5 Z" fill="#fff" stroke="#9a9a9a" stroke-width="1"/><path d="M10 0.5 V4 H13.5" fill="#f0f0f0" stroke="#9a9a9a" stroke-width=".8"/></svg>
<div class="t" style="left:215.2px;top:506.8px;height:18px;line-height:18px;font-size:13px;color:#000;transform:scaleX(0.8813);transform-origin:0 50%;">su</div>
<svg style="left:197px;top:526.0px" width="16" height="16" viewBox="0 0 16 16"><circle cx="8.5" cy="7.5" r="7" fill="#d7e9f8" stroke="#8db8e0" stroke-width="1"/><circle cx="8.5" cy="7.5" r="2.2" fill="#fff" stroke="#a9c9e8" stroke-width=".8"/><path d="M0.5 14.5 L3 8.5 L5 11 L7.5 9 L6 15 Z" fill="#2f8fe0"/><path d="M4 12 L6.5 9.5" stroke="#f08030" stroke-width="1.5"/></svg>
<div class="t" style="left:215.2px;top:525.8px;height:18px;line-height:18px;font-size:13px;color:#000;transform:scaleX(0.8564);transform-origin:0 50%;">Superuser.apk</div>
<svg style="left:197px;top:545.0px" width="16" height="16" viewBox="0 0 16 16"><rect x="0.5" y="1.5" width="15" height="13" fill="#fff" stroke="#6b7f96"/><rect x="1" y="2" width="14" height="2" fill="#c9d6e6"/><circle cx="6.5" cy="8" r="2.6" fill="none" stroke="#5a7fb0" stroke-width="1.4"/><circle cx="10.5" cy="11" r="1.8" fill="none" stroke="#5a7fb0" stroke-width="1.2"/></svg>
<div class="t" style="left:215.2px;top:544.8px;height:18px;line-height:18px;font-size:13px;color:#000;transform:scaleX(0.8162);transform-origin:0 50%;">TPSparkyRoot.bat</div>
<div class="a" style="left:190px;top:701px;width:760px;height:22px;background:#f0f0f0;border:1px solid #e0e0e0;"></div>
<div class="a" style="left:231px;top:702px;width:1px;height:20px;background:#dcdcdc;"></div>
<div class="a" style="left:682px;top:702px;width:1px;height:20px;background:#dcdcdc;"></div>
<svg style="left:194px;top:706px" width="16" height="11" viewBox="0 0 16 11"><path d="M1 2.5 L3 0.5 H15.5 V7.5 L13.5 10 H1 Z" fill="#a9ab86" stroke="#4a4a3a" stroke-width=".9"/><rect x="1.5" y="3" width="12" height="6.5" fill="#d6d8b8" stroke="#4a4a3a" stroke-width=".6"/><rect x="10" y="5" width="2" height="1.5" fill="#0aa"/></svg>
<svg style="left:213px;top:707px" width="17" height="9" viewBox="0 0 17 9"><path d="M0.5 3 H9 V5.5 H7.5 V7 H6 V5.5 H4.5 V7 H3 V5.5 H0.5 Z" fill="#e8d890" stroke="#111" stroke-width=".9"/><path d="M9.5 1 H15 L16.5 4.5 L15 8 H9.5 Z" fill="#f0e4a0" stroke="#111" stroke-width="1"/><rect x="12" y="3.2" width="2.2" height="2.6" fill="#111"/></svg>
<div class="t" style="left:687.5px;top:705.0px;height:17px;line-height:17px;font-size:12px;color:#000;transform:scaleX(0.9389);transform-origin:0 50%;">Összesen 1 mappa és 2 962 251 byte 9 fájlban</div>
</div>
<div id="explorer">
<div class="a" style="left:269px;top:76px;width:800px;height:601px;background:#ebebeb;box-shadow:inset 0 0 0 1px #dcdcdc;"></div>
<div class="a" style="left:277px;top:107px;width:784px;height:562px;background:#fff;"></div>
<div class="t" style="left:803px;top:81.1px;height:21px;line-height:21px;font-size:15px;color:#222;transform:scaleX(1.0122);transform-origin:0 50%;">xtab</div>
<div class="a" style="left:973px;top:88.5px;width:8px;height:2.2px;background:#1a1a1a;"></div>
<div class="a" style="left:999px;top:83px;width:10px;height:8px;border:1px solid #111;border-top-width:2.5px;"></div>
<div class="a" style="left:1017px;top:77px;width:45px;height:20px;background:#bcbcbc;"></div>
<svg style="left:1035px;top:83px" width="10" height="9" viewBox="0 0 10 9"><path d="M1 0.5 L9 8.5 M9 0.5 L1 8.5" stroke="#fff" stroke-width="1.8" fill="none"/></svg>
<svg style="left:278px;top:83px" width="15" height="17" viewBox="0 0 15 17"><path d="M1 2.5 L6 1 L6 16 L1 14.5 Z" fill="#f3dc8a" stroke="#d9b64a" stroke-width=".8"/><path d="M6 3 L13 3 L13 15 L6 16 Z" fill="#f7e7a6" stroke="#d6b24a" stroke-width=".8"/><path d="M4 2 L10 1.2 L10 15 L4 15.8Z" fill="#fbf0c0" stroke="#e0c060" stroke-width=".6"/><rect x="11.5" y="9.5" width="1.5" height="3" fill="#5aa7de"/></svg>
<div class="a" style="left:300px;top:85px;width:1px;height:12px;background:#a9a9a9;"></div>
<svg style="left:311px;top:83px" width="16" height="17" viewBox="0 0 16 17"><path d="M1 1.5 H9 L12 4.5 V15.5 H1 Z" fill="#fdfdfd" stroke="#8c8c8c" stroke-width="1"/><path d="M9 1.5 V4.5 H12" fill="none" stroke="#8c8c8c" stroke-width=".8"/><path d="M5.5 11.5 L8 14 L14 7" stroke="#e8703a" stroke-width="2.2" fill="none"/></svg>
<svg style="left:333px;top:83px" width="15" height="17" viewBox="0 0 15 17"><path d="M1 2.5 L6 1 L6 16 L1 14.5 Z" fill="#f3dc8a" stroke="#d9b64a" stroke-width=".8"/><path d="M6 3 L13 3 L13 15 L6 16 Z" fill="#f7e7a6" stroke="#d6b24a" stroke-width=".8"/><path d="M4 2 L10 1.2 L10 15 L4 15.8Z" fill="#fbf0c0" stroke="#e0c060" stroke-width=".6"/><rect x="11.5" y="9.5" width="1.5" height="3" fill="#5aa7de"/></svg>
<svg style="left:354px;top:89px" width="9" height="8" viewBox="0 0 9 8"><rect x="0.5" y="0" width="8" height="1.3" fill="#111"/><path d="M0.5 3 H8.5 L4.5 7 Z" fill="#111"/></svg>
<div class="a" style="left:372px;top:85px;width:1px;height:12px;background:#a9a9a9;"></div>
<div class="a" style="left:277px;top:106px;width:784px;height:1px;background:#dcdcdc;"></div>
<div class="a" style="left:553px;top:80px;width:117px;height:27px;background:#ebc8f7;"></div>
<div class="t" style="left:560px;top:86.5px;height:17px;line-height:17px;font-size:12px;color:#3c3c3c;transform:scaleX(0.9203);transform-origin:0 50%;">Alkalmazáseszközök</div>
<div class="a" style="left:277px;top:130px;width:784px;height:1px;background:#dadbdc;"></div>
<div class="a" style="left:277px;top:107px;width:56px;height:23px;background:#1979ca;"></div>
<div class="t" style="left:296px;top:112.0px;height:17px;line-height:17px;font-size:12px;color:#fff;transform:scaleX(0.9568);transform-origin:0 50%;">Fájl</div>
<div class="t" style="left:346px;top:112.0px;height:17px;line-height:17px;font-size:12px;color:#444;transform:scaleX(0.9353);transform-origin:0 50%;">Kezdőlap</div>
<div class="t" style="left:422.3px;top:112.0px;height:17px;line-height:17px;font-size:12px;color:#444;transform:scaleX(0.9392);transform-origin:0 50%;">Megosztás</div>
<div class="t" style="left:506.3px;top:112.0px;height:17px;line-height:17px;font-size:12px;color:#444;transform:scaleX(0.9092);transform-origin:0 50%;">Nézet</div>
<div class="t" style="left:592.3px;top:112.0px;height:17px;line-height:17px;font-size:12px;color:#444;transform:scaleX(0.8550);transform-origin:0 50%;">Kezelés</div>
<div class="a" style="left:553px;top:107px;width:1px;height:19px;background:#e6e6e6;"></div>
<div class="a" style="left:669px;top:107px;width:1px;height:19px;background:#e6e6e6;"></div>
<svg style="left:1022px;top:114px" width="12" height="9" viewBox="0 0 12 9"><path d="M1.5 1.5 L6 6 L10.5 1.5" stroke="#9a9a9a" stroke-width="2" fill="none"/></svg>
<svg style="left:1043px;top:111px" width="15" height="15" viewBox="0 0 15 15"><circle cx="7.5" cy="7.5" r="7.2" fill="#1a73c8"/><text x="7.5" y="11.6" font-family="Liberation Sans,sans-serif" font-weight="bold" font-size="12" fill="#fff" text-anchor="middle">?</text></svg>
<div class="a" style="left:380px;top:138px;width:430px;height:22px;background:#fff;border:1px solid #d9d9d9;"></div>
<div class="a" style="left:809px;top:138px;width:26px;height:22px;background:#fff;border:1px solid #d9d9d9;"></div>
<svg style="left:796px;top:146px" width="9" height="7" viewBox="0 0 9 7"><path d="M1 1 L4.5 4.8 L8 1" stroke="#444" stroke-width="1.8" fill="none"/></svg>
<svg style="left:816px;top:143px" width="12" height="12" viewBox="0 0 12 12"><path d="M9.8 4.2 A4.3 4.3 0 1 1 5.5 2" stroke="#666" stroke-width="1.6" fill="none"/><path d="M5.2 0 L8.8 2.2 L5.2 4.6 Z" fill="#666"/></svg>
<div class="a" style="left:847px;top:138px;width:202px;height:22px;background:#fff;border:1px solid #d9d9d9;"></div>
<div class="t" style="left:856.3px;top:141.3px;height:17px;line-height:17px;font-size:12px;color:#6d6d6d;transform:scaleX(0.8995);transform-origin:0 50%;">Keresés: xtab</div>
<svg style="left:1028px;top:142px" width="13" height="13" viewBox="0 0 13 13"><circle cx="8" cy="5" r="3.3" stroke="#666" stroke-width="1.6" fill="none"/><path d="M5.6 7.4 L1.5 11.5" stroke="#666" stroke-width="2.2"/></svg>
<div class="a" style="left:435px;top:164px;width:1px;height:481px;background:#f0f0f0;"></div>
<div class="t" style="left:455px;top:173.3px;height:17px;line-height:17px;font-size:12px;color:#4c607a;">Név</div>
<div class="t" style="left:715px;top:173.3px;height:17px;line-height:17px;font-size:12px;color:#4c607a;transform:scaleX(1.0028);transform-origin:0 50%;">Módosítás dátuma</div>
<div class="t" style="left:835.5px;top:173.3px;height:17px;line-height:17px;font-size:12px;color:#4c607a;transform:scaleX(0.9496);transform-origin:0 50%;">Típus</div>
<div class="t" style="left:955.3px;top:173.3px;height:17px;line-height:17px;font-size:12px;color:#4c607a;transform:scaleX(0.9943);transform-origin:0 50%;">Méret</div>
<div class="a" style="left:708px;top:168px;width:1px;height:22px;background:linear-gradient(rgba(220,228,240,0),#dfe6f0 25%,#dfe6f0 75%,rgba(220,228,240,0));"></div>
<div class="a" style="left:828px;top:168px;width:1px;height:22px;background:linear-gradient(rgba(220,228,240,0),#dfe6f0 25%,#dfe6f0 75%,rgba(220,228,240,0));"></div>
<div class="a" style="left:948px;top:168px;width:1px;height:22px;background:linear-gradient(rgba(220,228,240,0),#dfe6f0 25%,#dfe6f0 75%,rgba(220,228,240,0));"></div>
<div class="a" style="left:1028px;top:168px;width:1px;height:22px;background:linear-gradient(rgba(220,228,240,0),#dfe6f0 25%,#dfe6f0 75%,rgba(220,228,240,0));"></div>
<svg style="left:573px;top:169px" width="8" height="5" viewBox="0 0 8 5"><path d="M0 4.5 L4 0.5 L8 4.5 Z" fill="#6cb0dc"/></svg>
<div class="a" style="left:451px;top:388px;width:574px;height:22px;background:#f7f7f7;border:1px solid #dedede;"></div>
<svg style="left:455px;top:201.0px" width="16" height="16" viewBox="0 0 16 16"><path d="M2 1.5 L7 0.5 L7 15.5 L2 14 Z" fill="#f3dc8a" stroke="#d9b64a" stroke-width=".8"/><path d="M7 2.5 L14 2.5 L14 14.5 L7 15.5 Z" fill="#f7e7a6" stroke="#d6b24a" stroke-width=".8"/></svg>
<div class="t" style="left:475px;top:202.0px;height:17px;line-height:17px;font-size:12px;color:#000;transform:scaleX(0.9608);transform-origin:0 50%;">Microsoft.VC90.CRT</div>
<div class="t" style="left:715px;top:202.0px;height:17px;line-height:17px;font-size:12px;color:#6d6d6d;transform:scaleX(0.9043);transform-origin:0 50%;">2012.09.07. 23:27</div>
<div class="t" style="left:835px;top:202.0px;height:17px;line-height:17px;font-size:12px;color:#6d6d6d;transform:scaleX(0.9727);transform-origin:0 50%;">Fájlmappa</div>
<svg style="left:455px;top:222.0px" width="16" height="16" viewBox="0 0 16 16"><rect x="0.5" y="2.5" width="15" height="11" fill="#fff" stroke="#777"/><rect x="1" y="3" width="14" height="2.5" fill="#3a6ea5"/><rect x="2" y="7" width="5" height="5" fill="#5b9f6a"/></svg>
<div class="t" style="left:475px;top:223.0px;height:17px;line-height:17px;font-size:12px;color:#000;transform:scaleX(0.9490);transform-origin:0 50%;">adb</div>
<div class="t" style="left:715px;top:223.0px;height:17px;line-height:17px;font-size:12px;color:#6d6d6d;transform:scaleX(0.8936);transform-origin:0 50%;">2012.08.24. 0:13</div>
<div class="t" style="left:835px;top:223.0px;height:17px;line-height:17px;font-size:12px;color:#6d6d6d;transform:scaleX(0.9616);transform-origin:0 50%;">Alkalmazás</div>
<div class="t" style="left:992.5px;top:223.0px;height:17px;line-height:17px;font-size:12px;color:#6d6d6d;transform:scaleX(0.8718);transform-origin:0 50%;">96 KB</div>
<svg style="left:455px;top:243.0px" width="16" height="16" viewBox="0 0 16 16"><path d="M2.5 0.5 H10 L13.5 4 V15.5 H2.5 Z" fill="#fff" stroke="#9a9a9a" stroke-width="1"/><circle cx="6.5" cy="7" r="2.3" fill="none" stroke="#5a7fb0" stroke-width="1.4"/><circle cx="9.5" cy="10.5" r="2" fill="none" stroke="#5a7fb0" stroke-width="1.3"/></svg>
<div class="t" style="left:475px;top:244.0px;height:17px;line-height:17px;font-size:12px;color:#000;transform:scaleX(1.0308);transform-origin:0 50%;">AdbWinApi.dll</div>
<div class="t" style="left:715px;top:244.0px;height:17px;line-height:17px;font-size:12px;color:#6d6d6d;transform:scaleX(0.9043);transform-origin:0 50%;">2012.08.16. 17:47</div>
<div class="t" style="left:835px;top:244.0px;height:17px;line-height:17px;font-size:12px;color:#6d6d6d;transform:scaleX(0.9601);transform-origin:0 50%;">Alkalmazáskiterjes...</div>
<div class="t" style="left:986px;top:244.0px;height:17px;line-height:17px;font-size:12px;color:#6d6d6d;transform:scaleX(0.8892);transform-origin:0 50%;">100 KB</div>
<svg style="left:455px;top:264.0px" width="16" height="16" viewBox="0 0 16 16"><path d="M2.5 0.5 H10 L13.5 4 V15.5 H2.5 Z" fill="#fff" stroke="#9a9a9a" stroke-width="1"/><circle cx="6.5" cy="7" r="2.3" fill="none" stroke="#5a7fb0" stroke-width="1.4"/><circle cx="9.5" cy="10.5" r="2" fill="none" stroke="#5a7fb0" stroke-width="1.3"/></svg>
<div class="t" style="left:475px;top:265.0px;height:17px;line-height:17px;font-size:12px;color:#000;transform:scaleX(1.0152);transform-origin:0 50%;">AdbWinUsbApi.dll</div>
<div class="t" style="left:715px;top:265.0px;height:17px;line-height:17px;font-size:12px;color:#6d6d6d;transform:scaleX(0.9043);transform-origin:0 50%;">2012.08.16. 17:47</div>
<div class="t" style="left:835px;top:265.0px;height:17px;line-height:17px;font-size:12px;color:#6d6d6d;transform:scaleX(0.9601);transform-origin:0 50%;">Alkalmazáskiterjes...</div>
<div class="t" style="left:992.5px;top:265.0px;height:17px;line-height:17px;font-size:12px;color:#6d6d6d;transform:scaleX(0.8718);transform-origin:0 50%;">65 KB</div>
<svg style="left:455px;top:285.0px" width="16" height="16" viewBox="0 0 16 16"><path d="M2.5 0.5 H10 L13.5 4 V15.5 H2.5 Z" fill="#fff" stroke="#9a9a9a" stroke-width="1"/><path d="M10 0.5 V4 H13.5" fill="#f0f0f0" stroke="#9a9a9a" stroke-width=".8"/></svg>
<div class="t" style="left:475px;top:286.0px;height:17px;line-height:17px;font-size:12px;color:#000;transform:scaleX(1.0068);transform-origin:0 50%;">busybox</div>
<div class="t" style="left:715px;top:286.0px;height:17px;line-height:17px;font-size:12px;color:#6d6d6d;transform:scaleX(0.9043);transform-origin:0 50%;">2012.12.14. 13:39</div>
<div class="t" style="left:835px;top:286.0px;height:17px;line-height:17px;font-size:12px;color:#6d6d6d;transform:scaleX(0.9051);transform-origin:0 50%;">Fájl</div>
<div class="t" style="left:978px;top:286.0px;height:17px;line-height:17px;font-size:12px;color:#6d6d6d;transform:scaleX(0.8710);transform-origin:0 50%;">1 139 KB</div>
<svg style="left:455px;top:306.0px" width="16" height="16" viewBox="0 0 16 16"><path d="M2.5 0.5 H10 L13.5 4 V15.5 H2.5 Z" fill="#fff" stroke="#9a9a9a" stroke-width="1"/><path d="M10 0.5 V4 H13.5" fill="#f0f0f0" stroke="#9a9a9a" stroke-width=".8"/></svg>
<div class="t" style="left:475px;top:307.0px;height:17px;line-height:17px;font-size:12px;color:#000;transform:scaleX(0.9781);transform-origin:0 50%;">Developer</div>
<div class="t" style="left:715px;top:307.0px;height:17px;line-height:17px;font-size:12px;color:#6d6d6d;transform:scaleX(0.9043);transform-origin:0 50%;">2012.09.07. 23:43</div>
<div class="t" style="left:835px;top:307.0px;height:17px;line-height:17px;font-size:12px;color:#6d6d6d;transform:scaleX(0.9051);transform-origin:0 50%;">Fájl</div>
<div class="t" style="left:999.5px;top:307.0px;height:17px;line-height:17px;font-size:12px;color:#6d6d6d;transform:scaleX(0.8264);transform-origin:0 50%;">1 KB</div>
<svg style="left:455px;top:327.0px" width="16" height="16" viewBox="-0.5 -1.5 17 17"><circle cx="8.5" cy="7.5" r="7" fill="#d7e9f8" stroke="#8db8e0" stroke-width="1"/><circle cx="8.5" cy="7.5" r="2.2" fill="#fff" stroke="#a9c9e8" stroke-width=".8"/><path d="M0.5 14.5 L3 8.5 L5 11 L7.5 9 L6 15 Z" fill="#2f8fe0"/><path d="M4 12 L6.5 9.5" stroke="#f08030" stroke-width="1.5"/></svg>
<div class="t" style="left:475px;top:328.0px;height:17px;line-height:17px;font-size:12px;color:#000;transform:scaleX(0.9639);transform-origin:0 50%;">RootExplorer</div>
<div class="t" style="left:715px;top:328.0px;height:17px;line-height:17px;font-size:12px;color:#6d6d6d;transform:scaleX(0.9043);transform-origin:0 50%;">2012.08.20. 16:06</div>
<div class="t" style="left:835px;top:328.0px;height:17px;line-height:17px;font-size:12px;color:#6d6d6d;transform:scaleX(0.9995);transform-origin:0 50%;">MoboRobo Installer</div>
<div class="t" style="left:986px;top:328.0px;height:17px;line-height:17px;font-size:12px;color:#6d6d6d;transform:scaleX(0.8892);transform-origin:0 50%;">408 KB</div>
<svg style="left:455px;top:348.0px" width="16" height="16" viewBox="0 0 16 16"><path d="M2.5 0.5 H10 L13.5 4 V15.5 H2.5 Z" fill="#fff" stroke="#9a9a9a" stroke-width="1"/><path d="M10 0.5 V4 H13.5" fill="#f0f0f0" stroke="#9a9a9a" stroke-width=".8"/></svg>
<div class="t" style="left:475px;top:349.0px;height:17px;line-height:17px;font-size:12px;color:#000;transform:scaleX(0.9468);transform-origin:0 50%;">su</div>
<div class="t" style="left:715px;top:349.0px;height:17px;line-height:17px;font-size:12px;color:#6d6d6d;transform:scaleX(0.8936);transform-origin:0 50%;">2008.02.29. 9:33</div>
<div class="t" style="left:835px;top:349.0px;height:17px;line-height:17px;font-size:12px;color:#6d6d6d;transform:scaleX(0.9051);transform-origin:0 50%;">Fájl</div>
<div class="t" style="left:992.5px;top:349.0px;height:17px;line-height:17px;font-size:12px;color:#6d6d6d;transform:scaleX(0.8718);transform-origin:0 50%;">90 KB</div>
<svg style="left:455px;top:369.0px" width="16" height="16" viewBox="-0.5 -1.5 17 17"><circle cx="8.5" cy="7.5" r="7" fill="#d7e9f8" stroke="#8db8e0" stroke-width="1"/><circle cx="8.5" cy="7.5" r="2.2" fill="#fff" stroke="#a9c9e8" stroke-width=".8"/><path d="M0.5 14.5 L3 8.5 L5 11 L7.5 9 L6 15 Z" fill="#2f8fe0"/><path d="M4 12 L6.5 9.5" stroke="#f08030" stroke-width="1.5"/></svg>
<div class="t" style="left:475px;top:370.0px;height:17px;line-height:17px;font-size:12px;color:#000;transform:scaleX(0.9392);transform-origin:0 50%;">Superuser</div>
<div class="t" style="left:715px;top:370.0px;height:17px;line-height:17px;font-size:12px;color:#6d6d6d;transform:scaleX(0.8936);transform-origin:0 50%;">2008.02.29. 9:33</div>
<div class="t" style="left:835px;top:370.0px;height:17px;line-height:17px;font-size:12px;color:#6d6d6d;transform:scaleX(0.9995);transform-origin:0 50%;">MoboRobo Installer</div>
<div class="t" style="left:986px;top:370.0px;height:17px;line-height:17px;font-size:12px;color:#6d6d6d;transform:scaleX(0.8892);transform-origin:0 50%;">997 KB</div>
<svg style="left:455px;top:390.0px" width="16" height="16" viewBox="0 0 16 16"><rect x="0.5" y="1.5" width="15" height="13" fill="#fff" stroke="#6b7f96"/><rect x="1" y="2" width="14" height="2" fill="#c9d6e6"/><circle cx="6.5" cy="8" r="2.6" fill="none" stroke="#5a7fb0" stroke-width="1.4"/><circle cx="10.5" cy="11" r="1.8" fill="none" stroke="#5a7fb0" stroke-width="1.2"/></svg>
<div class="t" style="left:475px;top:391.0px;height:17px;line-height:17px;font-size:12px;color:#000;transform:scaleX(0.9484);transform-origin:0 50%;">TPSparkyRoot</div>
<div class="t" style="left:715px;top:391.0px;height:17px;line-height:17px;font-size:12px;color:#6d6d6d;transform:scaleX(0.8936);transform-origin:0 50%;">2012.12.28. 8:28</div>
<div class="t" style="left:835px;top:391.0px;height:17px;line-height:17px;font-size:12px;color:#6d6d6d;transform:scaleX(1.0082);transform-origin:0 50%;">Windows kötegfájl</div>
<div class="t" style="left:999.5px;top:391.0px;height:17px;line-height:17px;font-size:12px;color:#6d6d6d;transform:scaleX(0.8264);transform-origin:0 50%;">2 KB</div>
<svg style="left:297px;top:326px" width="16" height="16" viewBox="0 0 16 16"><rect x="4.5" y="1.5" width="11" height="9" fill="#2f6fd0" stroke="#555"/><rect x="6" y="3" width="8" height="6" fill="#4aa0f0"/><rect x="8" y="11" width="4" height="2" fill="#888"/><rect x="6" y="13" width="8" height="1.5" fill="#aaa"/><rect x="0.5" y="5.5" width="3" height="9" fill="#ddd" stroke="#666"/></svg>
<div class="t" style="left:318.3px;top:326.7px;height:17px;line-height:17px;font-size:12px;color:#000;transform:scaleX(0.8972);transform-origin:0 50%;">Ez a gép</div>
<svg style="left:308px;top:346.5px" width="16" height="16" viewBox="0 0 16 16"><path d="M1 1.5 L6 0.5 L6 15.5 L1 14 Z" fill="#f3dc8a" stroke="#d9b64a" stroke-width=".8"/><path d="M6 2.5 L13 2.5 L13 14.5 L6 15.5 Z" fill="#f7e7a6" stroke="#d6b24a" stroke-width=".8"/><rect x="7" y="8" width="8" height="6" fill="#2c62b8" stroke="#444" stroke-width=".6"/></svg>
<div class="t" style="left:328.3px;top:347.7px;height:17px;line-height:17px;font-size:12px;color:#000;transform:scaleX(0.9946);transform-origin:0 50%;">Asztal</div>
<svg style="left:308px;top:367.5px" width="16" height="16" viewBox="0 0 16 16"><path d="M1 1.5 L6 0.5 L6 15.5 L1 14 Z" fill="#f3dc8a" stroke="#d9b64a" stroke-width=".8"/><path d="M6 2.5 L13 2.5 L13 14.5 L6 15.5 Z" fill="#f7e7a6" stroke="#d6b24a" stroke-width=".8"/><rect x="7" y="4" width="7" height="9" fill="#fff" stroke="#889" stroke-width=".6"/><path d="M8 6h5M8 8h5M8 10h5" stroke="#57a" stroke-width=".8"/></svg>
<div class="t" style="left:328.3px;top:368.7px;height:17px;line-height:17px;font-size:12px;color:#000;transform:scaleX(1.0353);transform-origin:0 50%;">Dokumentumok</div>
<svg style="left:308px;top:388.5px" width="16" height="16" viewBox="0 0 16 16"><path d="M1 1.5 L6 0.5 L6 15.5 L1 14 Z" fill="#f3dc8a" stroke="#d9b64a" stroke-width=".8"/><path d="M6 2.5 L13 2.5 L13 14.5 L6 15.5 Z" fill="#f7e7a6" stroke="#d6b24a" stroke-width=".8"/><rect x="6.5" y="6" width="8" height="7" fill="#9cd0f0" stroke="#778" stroke-width=".6"/><path d="M7 12.5 L10 9 L12 11 L14 10 V12.5Z" fill="#5a9a50"/></svg>
<div class="t" style="left:328.3px;top:389.7px;height:17px;line-height:17px;font-size:12px;color:#000;transform:scaleX(0.9258);transform-origin:0 50%;">Képek</div>
<svg style="left:308px;top:409.5px" width="16" height="16" viewBox="0 0 16 16"><path d="M1 1.5 L6 0.5 L6 15.5 L1 14 Z" fill="#f3dc8a" stroke="#d9b64a" stroke-width=".8"/><path d="M6 2.5 L13 2.5 L13 14.5 L6 15.5 Z" fill="#f7e7a6" stroke="#d6b24a" stroke-width=".8"/><path d="M9 6 H13 V10 H15.5 L11 15 L6.5 10 H9 Z" fill="#2f8fe6" stroke="#1c6fc0" stroke-width=".6"/></svg>
<div class="t" style="left:328.3px;top:410.7px;height:17px;line-height:17px;font-size:12px;color:#000;transform:scaleX(0.9597);transform-origin:0 50%;">Letöltések</div>
<svg style="left:308px;top:430.5px" width="16" height="16" viewBox="0 0 16 16"><path d="M1 1.5 L6 0.5 L6 15.5 L1 14 Z" fill="#f3dc8a" stroke="#d9b64a" stroke-width=".8"/><path d="M6 2.5 L13 2.5 L13 14.5 L6 15.5 Z" fill="#f7e7a6" stroke="#d6b24a" stroke-width=".8"/><rect x="7" y="4.5" width="8" height="9.5" fill="#444"/><rect x="9" y="5.5" width="4" height="7.5" fill="#6a9ad0"/></svg>
<div class="t" style="left:328.3px;top:431.7px;height:17px;line-height:17px;font-size:12px;color:#000;transform:scaleX(0.9733);transform-origin:0 50%;">Videók</div>
<svg style="left:308px;top:451.5px" width="16" height="16" viewBox="0 0 16 16"><path d="M1 1.5 L6 0.5 L6 15.5 L1 14 Z" fill="#f3dc8a" stroke="#d9b64a" stroke-width=".8"/><path d="M6 2.5 L13 2.5 L13 14.5 L6 15.5 Z" fill="#f7e7a6" stroke="#d6b24a" stroke-width=".8"/><path d="M10.5 4 C13 5 14 8 12 10 V12.5 A2 1.8 0 1 1 10.5 11 Z" fill="#2f8fe6"/></svg>
<div class="t" style="left:328.3px;top:452.7px;height:17px;line-height:17px;font-size:12px;color:#000;transform:scaleX(0.9323);transform-origin:0 50%;">Zene</div>
<svg style="left:308px;top:472.5px" width="16" height="16" viewBox="0 0 16 16"><rect x="1" y="0.5" width="3.4" height="3.4" fill="#25b4f0"/><rect x="5" y="0.5" width="3.4" height="3.4" fill="#25b4f0"/><rect x="1" y="4.5" width="3.4" height="3.4" fill="#25b4f0"/><rect x="5" y="4.5" width="3.4" height="3.4" fill="#25b4f0"/><rect x="0.5" y="9" width="15" height="6" rx="2" fill="#5a8aa8" stroke="#555" stroke-width=".9"/><rect x="1.5" y="10" width="13" height="2.2" rx="1" fill="#c8d4dc"/><rect x="11.8" y="11.5" width="1.8" height="2.2" fill="#58d048"/></svg>
<div class="t" style="left:328.3px;top:473.7px;height:17px;line-height:17px;font-size:12px;color:#000;transform:scaleX(0.9608);transform-origin:0 50%;">Helyi lemez (C:)</div>
<svg style="left:308px;top:493.5px" width="16" height="16" viewBox="0 0 16 16"><rect x="0.5" y="6.300" width="15" height="7.400" rx="2.400" fill="#c4c6c8" stroke="#666" stroke-width=".9"/><rect x="1.500" y="7.200" width="13" height="3" rx="1.500" fill="#f0f0f0"/><rect x="11.800" y="9.800" width="1.800" height="2.600" fill="#58d048"/></svg>
<div class="t" style="left:328.3px;top:494.7px;height:17px;line-height:17px;font-size:12px;color:#000;transform:scaleX(0.9294);transform-origin:0 50%;">Rendszer számára fe</div>
<svg style="left:308px;top:514.5px" width="16" height="16" viewBox="0 0 16 16"><rect x="0.5" y="6.300" width="15" height="7.400" rx="2.400" fill="#c4c6c8" stroke="#666" stroke-width=".9"/><rect x="1.500" y="7.200" width="13" height="3" rx="1.500" fill="#f0f0f0"/><rect x="11.800" y="9.800" width="1.800" height="2.600" fill="#58d048"/></svg>
<div class="t" style="left:328.3px;top:515.7px;height:17px;line-height:17px;font-size:12px;color:#000;transform:scaleX(0.9506);transform-origin:0 50%;">Helyi lemez (E:)</div>
<svg style="left:297px;top:556.5px" width="17" height="16" viewBox="0 0 17 16"><circle cx="6" cy="5.5" r="5" fill="#3aa0e8" stroke="#267"/><path d="M3 3 Q6 1 8 4 Q5 6 6 9 Q3 8 3 3Z" fill="#5cc060"/><rect x="7.5" y="6.5" width="9" height="6.5" fill="#2346c8" stroke="#334" stroke-width=".8"/><rect x="10.5" y="13" width="3" height="1.5" fill="#666"/><rect x="9" y="14.5" width="6" height="1" fill="#888"/></svg>
<div class="t" style="left:318.3px;top:557.7px;height:17px;line-height:17px;font-size:12px;color:#000;transform:scaleX(0.9831);transform-origin:0 50%;">Hálózat</div>
<div class="t" style="left:291.2px;top:648.5px;height:17px;line-height:17px;font-size:12px;color:#1c2a5c;transform:scaleX(0.9487);transform-origin:0 50%;">10 elem</div>
<div class="t" style="left:353.2px;top:648.5px;height:17px;line-height:17px;font-size:12px;color:#1c2a5c;transform:scaleX(0.9662);transform-origin:0 50%;">1 kijelölt elem - 1,47 KB</div>
<div class="a" style="left:342.5px;top:651px;width:1px;height:13px;background:#efefef;"></div>
<div class="a" style="left:485.5px;top:651px;width:1px;height:13px;background:#efefef;"></div>
</div>
<div id="cmd">
<div class="a" style="left:130px;top:130px;width:357px;height:193px;background:#efc665;box-shadow:inset 0 0 0 1px #cfa84c;"></div>
<div class="a" style="left:142px;top:140px;width:16px;height:13px;background:#000;border:1px solid #8a94a6;border-top:3px solid #c4ccda;"></div>
<div class="t" style="left:143.3px;top:143.7px;height:8px;line-height:8px;font-size:5.5px;color:#fff;font-family:'Liberation Mono',monospace;font-weight:bold;">C:\_</div>
<div class="t" style="left:166.9px;top:134.6px;height:22px;line-height:22px;font-size:16px;color:#453d2a;transform:scaleX(0.9275);transform-origin:0 50%;">C:\Windows\system32\cmd.exe</div>
<div class="a" style="left:389px;top:142px;width:8.5px;height:2.5px;background:#161620;"></div>
<div class="a" style="left:415px;top:137px;width:10px;height:8px;border:1px solid #161620;border-top-width:2px;"></div>
<div class="a" style="left:433px;top:131px;width:45px;height:20px;background:#c75050;"></div>
<svg style="left:451.5px;top:137.5px" width="9" height="8" viewBox="0 0 9 8"><path d="M0.8 0.4 L8.2 7.6 M8.2 0.4 L0.8 7.6" stroke="#fff" stroke-width="1.7" fill="none"/></svg>
<div class="a" style="left:140px;top:163px;width:320px;height:150px;background:#000;"></div>
<div class="a" style="left:460px;top:163px;width:17px;height:150px;background:#f0f0f0;border-left:1px solid #fff;"></div>
<div class="a" style="left:461px;top:180px;width:16px;height:18px;background:#cdcdcd;"></div>
<svg style="left:464px;top:168px" width="9" height="6" viewBox="0 0 9 6"><path d="M1 5 L4.5 1.5 L8 5" stroke="#505050" stroke-width="1.7" fill="none"/></svg>
<svg style="left:464.5px;top:302px" width="9" height="6" viewBox="0 0 9 6"><path d="M1 1 L4.5 4.5 L8 1" stroke="#505050" stroke-width="1.7" fill="none"/></svg>
<pre class="a" style="left:140.4px;top:163.4px;font-family:'Liberation Mono',monospace;font-size:6.667px;line-height:6px;color:#e6e6e6;letter-spacing:0">*---* VonDroid.com N101 II Root Tool based on work by sunnydavid *---*
--- Plug in your device, make sure debugging is enabled in Developer Options
--- This script will now copy files over to your N101 II

adb server is out of date.  killing...
* daemon started successfully *
--- Reboot 1/3 - Press Space Bar once the device has rebooted
Press any key to continue . . .</pre>
</div>
<div id="popup">
<div class="a" style="left:946px;top:540px;width:334px;height:220px;border:1px solid #2c3a48;border-radius:3px;background:linear-gradient(#e6e6e6 0px,#e0e0e0 4px,#d8d8d8 7px,#d8d8d8 100%);box-shadow:inset 0 0 0 1px #f4f4f4;"></div>
<div class="a" style="left:948px;top:572px;width:330px;height:186px;background:#e8e8e8;border-radius:4px 4px 2px 2px;border-top:1px solid #f6f6f6;"></div>
<svg style="left:955px;top:549px" width="15" height="12" viewBox="0 0 15 12"><defs><linearGradient id="mb" x1="0" y1="0" x2="1" y2="0"><stop offset="0" stop-color="#1aa5f5"/><stop offset="0.55" stop-color="#2a8fe8"/><stop offset="0.62" stop-color="#f47a20"/><stop offset="1" stop-color="#f0541a"/></linearGradient></defs><path d="M0 11 L3.5 1 L7.5 6 L14.5 1.5 L12 9.5 L10.5 6.5 L7 9 L4.3 5.5 L2.5 11 Z" fill="url(#mb)"/></svg>
<div class="t" style="left:974px;top:547.3px;height:17px;line-height:17px;font-size:12px;color:#1a1a50;font-weight:bold;transform:scaleX(0.9786);transform-origin:0 50%;">MoboRobo</div>
<svg style="left:1255px;top:549px" width="14" height="14" viewBox="0 0 14 14"><defs><linearGradient id="cx1" x1="0" y1="0" x2="0" y2="1" gradientUnits="userSpaceOnUse"><stop offset="0.1" stop-color="#b02418"/><stop offset=".5" stop-color="#dc5420"/><stop offset=".95" stop-color="#f47c18"/></linearGradient></defs><path d="M2.4 2.4 L11.6 11.600 M11.6 2.4 L2.4 11.600" stroke="url(#cx1)" stroke-width="2.6" stroke-linecap="round" fill="none"/></svg>
<svg style="left:962px;top:611px" width="78" height="44" viewBox="0 0 78 44">
<rect x="0.5" y="0.5" width="47" height="33" rx="2" fill="#6fc3ea"/>
<rect x="3" y="3" width="42" height="27.5" fill="#7ecbee" stroke="#c9ecfa" stroke-width="1"/>
<path d="M20 33.5 H28 L29 41 H19 Z" fill="#6fc3ea"/>
<path d="M7 43.3 Q24 39.5 41 43.3 Z" fill="#6fc3ea"/>
<rect x="50.5" y="22.5" width="6" height="9" fill="#6fc3ea"/>
<path d="M58 21 H69 Q73 21 73 27 Q73 33 69 33 H58 Z" fill="#8ad0f0"/>
<path d="M73 26 L78 29 L73 28.5 Z" fill="#9ad6f2"/>
<path d="M61 27 H70 M64 25 V29 M67 25.5 V28.5" stroke="#d6f0fb" stroke-width=".9"/>
</svg>
<div class="t" style="left:1056.8px;top:595.0px;height:22px;line-height:22px;font-size:16px;color:#0f6fcc;font-weight:bold;transform:scaleX(1.0044);transform-origin:0 50%;">Device connected!</div>
<div class="t" style="left:1056.3px;top:631.3px;height:17px;line-height:17px;font-size:12px;color:#111;transform:scaleX(1.0124);transform-origin:0 50%;">Launch MoboRobo to sync data?</div>
<div class="a" style="left:1162px;top:697px;width:105px;height:27px;border:1px solid #c4621a;border-radius:4px;background:linear-gradient(#ffd682 0%,#ffc452 35%,#ffb02a 70%,#ffa61a 100%);box-shadow:inset 0 0 0 1px rgba(255,232,176,.85),0 1px 2px rgba(0,0,0,.55);"></div>
<svg style="left:1171px;top:701px" width="18" height="18" viewBox="0 0 18 18"><circle cx="9" cy="9" r="7" fill="none" stroke="#fffaf0" stroke-width="2.2"/><path d="M5 7.600 H9.300 V5 L13.600 9 L9.300 13 V10.400 H5 Z" fill="#fffaf0"/></svg>
<div class="t" style="left:1200.5px;top:702.5px;height:17px;line-height:17px;font-size:12px;color:#fff;font-weight:bold;transform:scaleX(0.9562);transform-origin:0 50%;text-shadow:0 0 1px rgba(200,120,0,.5);">Launch</div>
<div class="a" style="left:960px;top:726px;width:13px;height:13px;background:#fff;border:1px solid;border-color:#9a9a9a #fff #fff #9a9a9a;box-shadow:inset 1px 1px 0 #6a6a6a, inset -1px -1px 0 #e8e8e8;"></div>
<div class="t" style="left:978.3px;top:724.3px;height:17px;line-height:17px;font-size:12px;color:#111;transform:scaleX(1.0073);transform-origin:0 50%;">Don't ask again.</div>
</div>
<div id="taskbar">
<div class="a" style="left:0px;top:760px;width:1280px;height:40px;background:linear-gradient(rgba(162,136,70,.6),rgba(146,124,66,.62));border-top:1px solid rgba(120,90,30,.3);"></div>
<svg style="left:10px;top:766px" width="28" height="27" viewBox="0 0 28 27"><path d="M0 4 L11.5 2.3 V12.8 H0 Z M13 2.1 L28 0 V12.8 H13 Z M0 14.2 H11.5 V24.7 L0 23 Z M13 14.2 H28 V27 L13 24.9 Z" fill="#fff"/></svg>
<div class="a" style="left:66px;top:765px;width:30px;height:30px;background:#0a8a0a;"></div>
<svg style="left:69px;top:768px" width="24" height="24" viewBox="0 0 24 24"><path d="M2 8 H22 L19.5 22 H4.5 Z" fill="#fff"/><path d="M8 8 C8 2 16 2 16 8" stroke="#fff" stroke-width="1.6" fill="none"/><path d="M7.5 11.5 L11.3 11 V14.3 H7.5 Z M12.3 10.9 L16.5 10.3 V14.3 H12.3 Z M7.5 15.2 H11.3 V18.5 L7.5 18 Z M12.3 15.2 H16.5 V19.2 L12.3 18.6 Z" fill="#0a8a0a"/></svg>
<div class="a" style="left:114px;top:761px;width:158px;height:38px;background:rgba(255,255,255,.1);border:1px solid rgba(255,240,200,.4);"></div>
<div class="a" style="left:115px;top:762px;width:140px;height:36px;background:linear-gradient(90deg,#5c9c5c 0%,#4cc04c 45%,#44e040 100%);"></div>
<div class="a" style="left:114px;top:761px;width:142px;height:38px;border:1px solid #86e484;border-right:0;"></div>
<div class="a" style="left:276px;top:761px;width:158px;height:38px;background:rgba(255,255,255,.1);border:1px solid rgba(255,240,200,.4);"></div>
<div class="a" style="left:438px;top:761px;width:158px;height:38px;background:rgba(255,255,255,.1);border:1px solid rgba(255,240,200,.4);"></div>
<div class="a" style="left:600px;top:761px;width:158px;height:38px;background:rgba(255,255,255,.3);border:1px solid rgba(255,255,255,.8);"></div>
<div class="t" style="left:159px;top:771.5px;height:17px;line-height:17px;font-size:12px;color:#fff;transform:scaleX(0.9931);transform-origin:0 50%;">Rockchip Downlo...</div>
<div class="t" style="left:321px;top:771.5px;height:17px;line-height:17px;font-size:12px;color:#fff;transform:scaleX(0.9689);transform-origin:0 50%;">TPSarky-VonDroi...</div>
<div class="t" style="left:483px;top:771.5px;height:17px;line-height:17px;font-size:12px;color:#fff;transform:scaleX(0.9920);transform-origin:0 50%;">xtab</div>
<div class="t" style="left:645.5px;top:771.5px;height:17px;line-height:17px;font-size:12px;color:#fff;transform:scaleX(0.9971);transform-origin:0 50%;">C:\Windows\syst...</div>
<svg style="left:123px;top:765px" width="32" height="32" viewBox="2 1 46 46"><defs><radialGradient id="ffgt" cx=".55" cy=".25" r=".8"><stop offset="0" stop-color="#5cc8f8"/><stop offset=".45" stop-color="#1c6cc8"/><stop offset="1" stop-color="#0a1c60"/></radialGradient>
<linearGradient id="ffot" x1="0" y1="0" x2="0" y2="1"><stop offset="0" stop-color="#f8901c"/><stop offset=".5" stop-color="#f06a1c"/><stop offset="1" stop-color="#d8401c"/></linearGradient></defs>
<circle cx="24.500" cy="22" r="18.500" fill="url(#ffgt)"/>
<path d="M4 8 L9 11.500 L13.500 8.500 L16.500 13.500 C13 15.500 11.500 19 13 22.500 C16 21 20 21.500 23 24 C20 26.500 17.500 26.500 15.500 26 C17 30 22 32.500 27 31.500 C33 30.500 37.500 26 38 20 C39 15 37 11 35 8.500 C40 11 44 17 44 23.500 C44 34 35.500 42.500 24.500 42.500 C13 42.500 4.500 34 4.500 23 C4.500 19 5 15 6.500 12.500 Z" fill="url(#ffot)"/>
<path d="M35 8.500 C40 11 44 17 44 23.500 C44 28 42.500 32 40 35 C41.500 30 41.500 25 40 21 C40 24 39 26 38 27 C39 21 38 13 35 8.500 Z" fill="#ffd43a"/>
<path d="M16.500 13.500 C13 15.500 11.500 19 13 22.500 C16 21 20 21.500 23 24 L24 20.500 L20 17.500 Z" fill="#f89a28"/></svg>
<svg style="left:285px;top:765px" width="32" height="32" viewBox="-1 -4 43 43"><path d="M0.500 4 L3 0.500 H28 L40.500 5.500 L40.500 12.500 H7 L0.500 8 Z" fill="#5c2c60" stroke="#2a1030" stroke-width=".8"/>
<path d="M4 1.500 H11 L13 3.500 H6 Z" fill="#c8b830"/>
<path d="M0.500 4.500 L7 9 V15.500 L0.500 11 Z" fill="#eeeef4" stroke="#555" stroke-width=".5"/>
<path d="M7 8.500 H40.500 V15.500 H7 Z" fill="#c458c8"/><path d="M7 8.500 H40.500 V10.500 H7 Z" fill="#e090e0"/><path d="M7 13.500 H40.500 V15.500 H7 Z" fill="#8a3090"/>
<path d="M0.500 12 L7 16.500 V24.500 L0.500 20 Z" fill="#e8e8f0" stroke="#555" stroke-width=".5"/>
<path d="M7 16.500 H40.500 V24.500 H7 Z" fill="#1c28e0"/><path d="M7 16.500 H40.500 V18.500 H7 Z" fill="#4a60f4"/><path d="M7 22.500 H40.500 V24.500 H7 Z" fill="#101890"/>
<path d="M0.500 21 L7 25.500 V33.500 L0.500 29 Z" fill="#e8e8f0" stroke="#555" stroke-width=".5"/>
<path d="M7 25.500 H40.500 V33.500 H7 Z" fill="#14b020"/><path d="M7 25.500 H40.500 V27.500 H7 Z" fill="#40d848"/><path d="M7 31.500 H40.500 V33.500 H7 Z" fill="#087010"/>
<path d="M7 8.500 H40.500 V33.500 H7 Z" fill="none" stroke="#1a1a1a" stroke-width=".7"/>
<path d="M7 16 H40.500 M7 25 H40.500" stroke="#111" stroke-width="1"/>
<path d="M16 0.500 H20 L25 8.500 V33.500 H21.500 V8.500 Z" fill="#a06a2c" stroke="#4a2c0c" stroke-width=".6"/>
<rect x="20.500" y="13" width="6" height="8" rx="1" fill="#d0d0d0" stroke="#222" stroke-width="1"/><rect x="22.800" y="15" width="1.600" height="4" fill="#333"/>
<path d="M10 10.500h1.200v4H10z M12.500 10.500h1.200v4h-1.200z M10 18.500h1.200v4.500H10z M12.500 18.500h1.200v4.500h-1.200z M10 27h1.200v3.500H10z" fill="#e0cc40"/></svg>
<svg style="left:447px;top:763px" width="26" height="34" viewBox="0 0 26 34"><defs><linearGradient id="tf1" x1="0" y1="0" x2="1" y2="0"><stop offset="0" stop-color="#fbf0b4"/><stop offset="1" stop-color="#efd678"/></linearGradient></defs>
<path d="M2 3.500 L8.500 1 L9.500 2 V33 L2 29.500 Z" fill="#f6e8a4" stroke="#d9bc58" stroke-width=".8"/>
<path d="M5.500 3.500 L21 6 V28 L9.500 33 Z" fill="#fdf6d0" stroke="#e0c870" stroke-width=".6"/>
<path d="M9.500 6 L23.500 7.500 V29 L9.500 33 Z" fill="url(#tf1)" stroke="#d2ae48" stroke-width=".8"/>
<rect x="21" y="23.500" width="1.600" height="3.200" fill="#6ab0e0"/></svg>
<div class="a" style="left:609.5px;top:767px;width:29px;height:24.5px;background:#000;border:1px solid #7a8498;border-top:3px solid #b4c0d4;"></div>
<div class="t" style="left:612px;top:772.0px;height:10px;line-height:10px;font-size:7.5px;color:#fff;font-weight:bold;font-family:'Liberation Mono',monospace;">C:\_</div>
<svg style="left:1077px;top:778.5px" width="9" height="5" viewBox="0 0 9 5"><path d="M0 5 L4.5 0.300 L9 5 Z" fill="#fff"/></svg>
<svg style="left:1098px;top:773px" width="17" height="17" viewBox="0 0 17 17"><rect x="0.6" y="0.8" width="2.2" height="15" rx=".6" fill="#fff"/><path d="M3.6 1.6 H9.5 V3 H15.4 Q14.6 8.6 9.2 8.6 H3.6 Z" fill="#fff" fill-opacity=".92"/><path d="M9.5 3 V7.2" stroke="#b8a070" stroke-width=".8"/></svg>
<svg style="left:1122px;top:773px" width="17" height="17" viewBox="0 0 17 17"><rect x="7.600" y="2.800" width="8" height="12.500" rx="1" fill="#8a7c5c" stroke="#f4f0e4" stroke-width="1.2"/><rect x="9.600" y="1" width="4" height="2" fill="#f4f0e4"/><path d="M2.300 1 V5 M5.300 1 V5" stroke="#fff" stroke-width="1.400"/><path d="M0.800 4.600 H6.800 V8 Q6.800 10 3.800 10 Q0.800 10 0.800 8 Z" fill="#fff"/><path d="M3.800 10 V15.500" stroke="#fff" stroke-width="1.800"/><path d="M8.500 9.500 L14 15.500 M14 9.500 L8.500 15.500" stroke="#e61c1c" stroke-width="1.800"/></svg>
<svg style="left:1146px;top:773px" width="17" height="17" viewBox="0 0 17 17"><path d="M0.500 11.500 H3 V13.500 H0.500Z M3.800 9.500 H6.300 V13.500 H3.800Z M7.100 7.500 H9.600 V13.500 H7.100Z M10.400 5 H12.900 V13.500 H10.400Z M13.700 2.500 H16.200 V13.500 H13.700Z" fill="#fff" stroke="#e8e0cc" stroke-width=".5"/></svg>
<svg style="left:1170px;top:773px" width="17" height="17" viewBox="0 0 17 17"><path d="M0.800 5.500 H3.500 L7.500 1.500 V15 L3.500 11 H0.800 Z" fill="#fff" fill-opacity=".95" stroke="#fff" stroke-width=".8"/><path d="M9.500 5.800 Q11 8.300 9.500 10.800 M11.700 3.800 Q14.500 8.300 11.700 12.800 M13.900 2 Q17.600 8.300 13.900 14.600" stroke="#fff" stroke-width="1.200" fill="none"/></svg>
<div class="t" style="left:1219.8px;top:764.1px;height:17px;line-height:17px;font-size:12px;color:#fff;transform:scaleX(0.8592);transform-origin:0 50%;">17:55</div>
<div class="t" style="left:1204px;top:781.3px;height:17px;line-height:17px;font-size:12px;color:#fff;transform:scaleX(0.8944);transform-origin:0 50%;">2014.06.28.</div>
</div>
</body></html>
